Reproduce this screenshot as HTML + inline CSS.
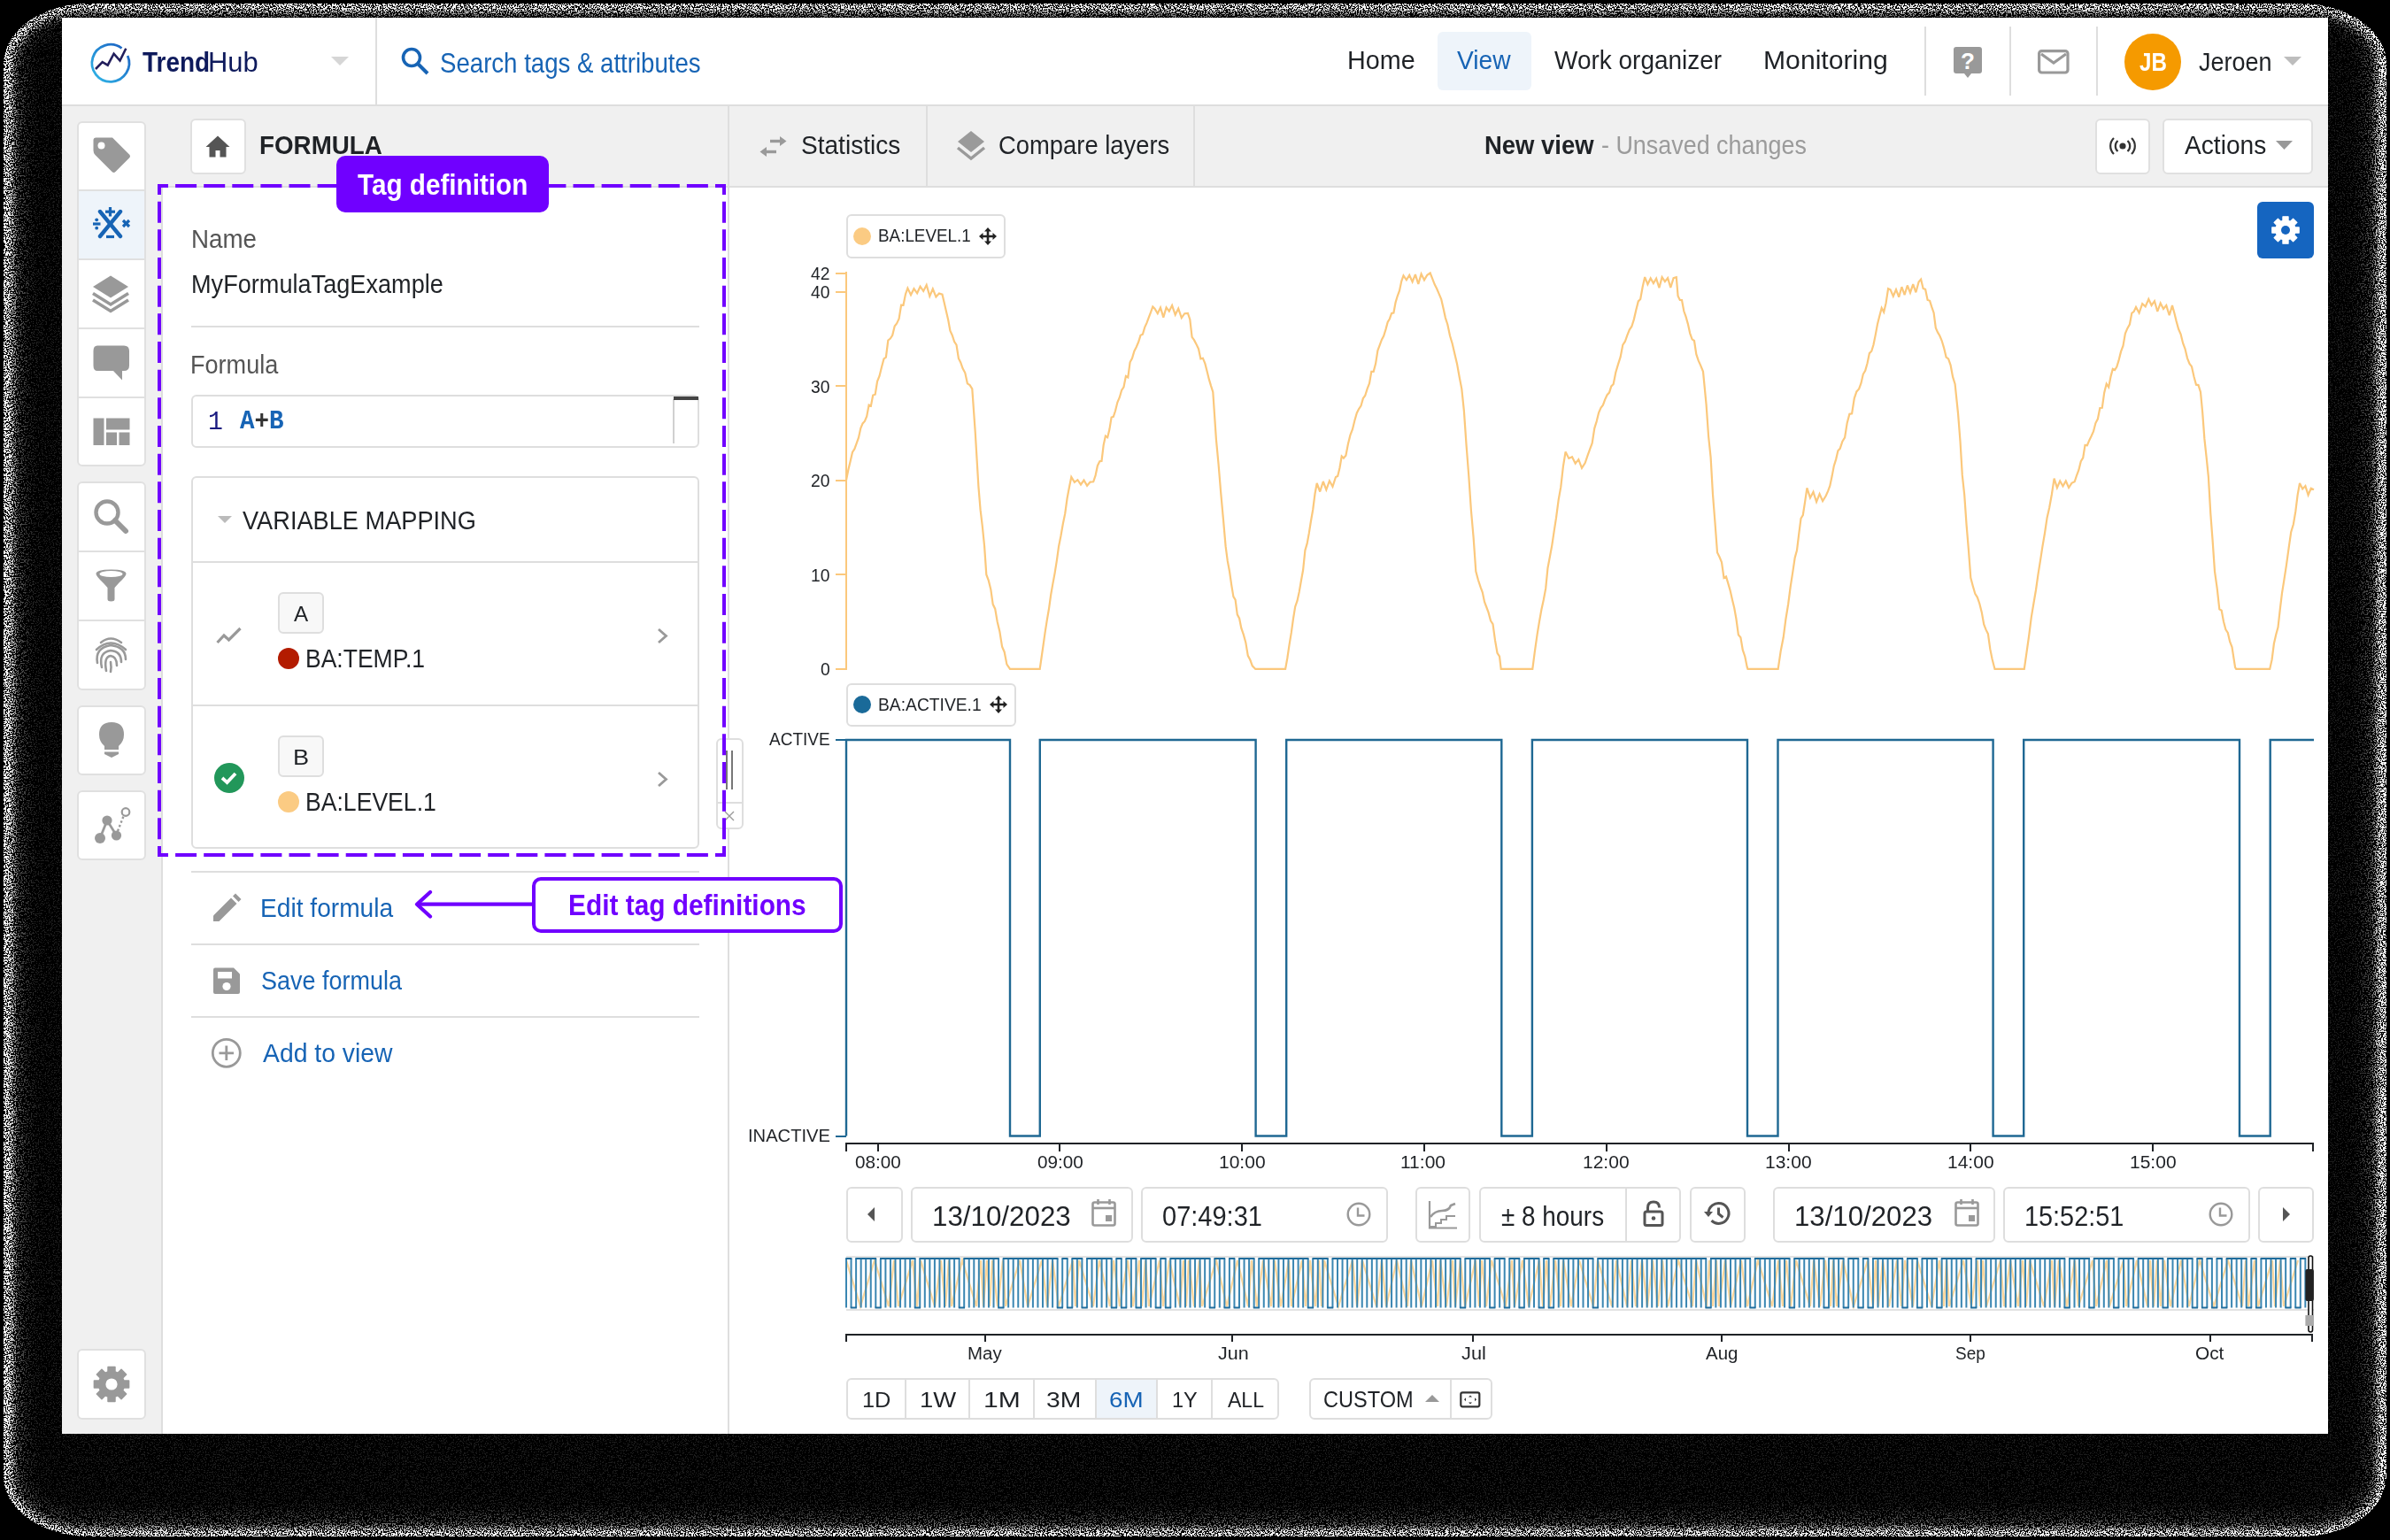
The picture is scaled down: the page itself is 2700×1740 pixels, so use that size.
<!DOCTYPE html>
<html><head><meta charset="utf-8"><title>TrendHub - Formula</title>
<style>
html,body{margin:0;padding:0;}
body{width:2700px;height:1740px;overflow:hidden;background:#000;position:relative;font-family:"Liberation Sans",sans-serif;}
.t{position:absolute;white-space:nowrap;transform-origin:0 0;}
.b{position:absolute;box-sizing:border-box;}
.s{position:absolute;overflow:visible;}
</style></head><body>
<svg class="s" style="left:0;top:0" width="2700" height="1740" viewBox="0 0 2700 1740">
<defs>
<filter id="blur4" x="-5%" y="-5%" width="110%" height="110%"><feGaussianBlur stdDeviation="4"/></filter>
<filter id="blur8" x="-5%" y="-5%" width="110%" height="110%"><feGaussianBlur stdDeviation="8"/></filter>
<filter id="speck" x="0" y="0" width="2700" height="1740" filterUnits="userSpaceOnUse" color-interpolation-filters="sRGB">
<feTurbulence type="fractalNoise" baseFrequency="0.65" numOctaves="2" seed="5" result="noise"/>
<feColorMatrix in="noise" type="matrix" values="0 0 0 0 1  0 0 0 0 1  0 0 0 0 1  3.2 0 0 0 -1.1" result="nw"/>
<feColorMatrix in="SourceGraphic" type="matrix" values="0 0 0 0 1  0 0 0 0 1  0 0 0 0 1  1 0 0 0 0" result="lw"/>
<feComposite in="lw" in2="nw" operator="arithmetic" k1="0" k2="12" k3="-12" k4="0" result="bin"/>
<feColorMatrix in="SourceGraphic" type="matrix" values="0 1 0 0 0  0 1 0 0 0  0 1 0 0 0  0 0 0 1 0" result="bright"/>
<feComposite in="bright" in2="bin" operator="in" result="mask"/>
<feFlood flood-color="#000" result="blk"/>
<feMerge><feMergeNode in="blk"/><feMergeNode in="mask"/></feMerge>
</filter>
</defs>
<g filter="url(#speck)">
<rect x="0" y="0" width="2700" height="1740" fill="#000"/>
<rect x="4" y="4" width="2692" height="1732" rx="96" ry="68" fill="#99ff00"/>
<rect x="16" y="17" width="2668" height="1709" rx="80" ry="56" fill="#595900" filter="url(#blur4)"/>
<rect x="30" y="22" width="2640" height="1688" rx="60" ry="46" fill="#401e00" filter="url(#blur8)"/>
</g>
</svg><div class="b" style="left:70px;top:20px;width:2560px;height:1600px;background:#fff;border-radius:0px;"></div><div class="b" style="left:70px;top:118px;width:2560px;height:2px;background:#dedede;border-radius:0px;"></div><div class="b" style="left:70px;top:120px;width:2560px;height:90px;background:#f0f0f0;border-radius:0px;"></div><div class="b" style="left:184px;top:210px;width:2446px;height:2px;background:#dedede;border-radius:0px;"></div><div class="b" style="left:70px;top:210px;width:112px;height:1410px;background:#f0f0f0;border-radius:0px;"></div><div class="b" style="left:182px;top:212px;width:2px;height:1408px;background:#dedede;border-radius:0px;"></div><div class="b" style="left:822px;top:120px;width:2px;height:1500px;background:#dedede;border-radius:0px;"></div><svg class="s" style="left:100px;top:45px;" width="48" height="50" viewBox="0 0 48 50">
<defs><linearGradient id="lg" x1="0" y1="1" x2="1" y2="0"><stop offset="0" stop-color="#30b8e8"/><stop offset="1" stop-color="#1a5cc0"/></linearGradient></defs>
<path d="M37.5 9.5 A21 21 0 1 0 44.2 18" fill="none" stroke="url(#lg)" stroke-width="2.8"/>
<polyline points="8,33 15.7,25.2 21.7,28.6 28.6,15.7 35.5,23.5 42.3,9.7" fill="none" stroke="#221e5c" stroke-width="2.6" stroke-linejoin="miter"/>
</svg><div class="t" style="left:160.93px;top:54.65px;font-size:31.25px;line-height:31.25px;color:#0e1a5c;font-weight:700;font-family:'Liberation Sans', sans-serif;transform:scaleX(0.8945);">Trend</div><div class="t" style="left:234.53px;top:54.65px;font-size:31.25px;line-height:31.25px;color:#0e1a5c;font-weight:400;font-family:'Liberation Sans', sans-serif;transform:scaleX(0.9888);">Hub</div><svg class="s" style="left:374px;top:64px;" width="20" height="10" viewBox="0 0 20 10"><path d="M0 0 L20 0 L10 10 Z" fill="#d6d6d6"/></svg><div class="b" style="left:424px;top:20px;width:2px;height:98px;background:#dedede;border-radius:0px;"></div><svg class="s" style="left:452px;top:52px;" width="36" height="36" viewBox="0 0 36 36"><circle cx="13" cy="13" r="9.5" fill="none" stroke="#1764b5" stroke-width="3.6"/><line x1="20" y1="20" x2="31" y2="31" stroke="#1764b5" stroke-width="4" stroke-linecap="butt"/></svg><div class="t" style="left:497.21px;top:55.01px;font-size:32.0px;line-height:32.0px;color:#1764b5;font-weight:400;font-family:'Liberation Sans', sans-serif;transform:scaleX(0.8628);">Search tags &amp; attributes</div><div class="t" style="left:1522.14px;top:54.34px;font-size:29.25px;line-height:29.25px;color:#1f2226;font-weight:400;font-family:'Liberation Sans', sans-serif;transform:scaleX(0.9838);">Home</div><div class="b" style="left:1624px;top:36px;width:106px;height:66px;background:#eef4fa;border-radius:6px;"></div><div class="t" style="left:1646.40px;top:54.34px;font-size:29.25px;line-height:29.25px;color:#1764b5;font-weight:400;font-family:'Liberation Sans', sans-serif;transform:scaleX(0.9637);">View</div><div class="t" style="left:1756.40px;top:54.34px;font-size:29.25px;line-height:29.25px;color:#1f2226;font-weight:400;font-family:'Liberation Sans', sans-serif;transform:scaleX(0.9564);">Work organizer</div><div class="t" style="left:1991.53px;top:54.34px;font-size:29.25px;line-height:29.25px;color:#1f2226;font-weight:400;font-family:'Liberation Sans', sans-serif;transform:scaleX(1.0311);">Monitoring</div><div class="b" style="left:2174px;top:30px;width:2px;height:78px;background:#dedede;border-radius:0px;"></div><div class="b" style="left:2270px;top:30px;width:2px;height:78px;background:#dedede;border-radius:0px;"></div><div class="b" style="left:2368px;top:30px;width:2px;height:78px;background:#dedede;border-radius:0px;"></div><svg class="s" style="left:2207px;top:52px;" width="32" height="38" viewBox="0 0 32 38"><path d="M3 1 H29 A3 3 0 0 1 32 4 V28 A3 3 0 0 1 29 31 H20 L16 36 L12 31 H3 A3 3 0 0 1 0 28 V4 A3 3 0 0 1 3 1 Z" fill="#999"/><text x="16" y="26" font-family="Liberation Sans" font-weight="700" font-size="26" fill="#fff" text-anchor="middle">?</text></svg><svg class="s" style="left:2302px;top:56px;" width="36" height="28" viewBox="0 0 36 28"><rect x="1.6" y="1.6" width="32.4" height="24.4" rx="3" fill="none" stroke="#999" stroke-width="3.2"/><polyline points="4,5 18,15 32,5" fill="none" stroke="#999" stroke-width="3.2"/></svg><div class="b" style="left:2400px;top:38px;width:64px;height:64px;border-radius:50%;background:#f59a00;"></div><div class="t" style="left:2416.67px;top:55.55px;font-size:29.0px;line-height:29.0px;color:#fff;font-weight:700;font-family:'Liberation Sans', sans-serif;transform:scaleX(0.8329);">JB</div><div class="t" style="left:2483.73px;top:55.55px;font-size:29.0px;line-height:29.0px;color:#1f2226;font-weight:400;font-family:'Liberation Sans', sans-serif;transform:scaleX(0.9316);">Jeroen</div><svg class="s" style="left:2580px;top:63.5px;" width="20" height="10" viewBox="0 0 20 10"><path d="M0 0 L20 0 L10 10 Z" fill="#bdbdbd"/></svg><div class="b" style="left:214.5px;top:134px;width:63px;height:63px;background:#fff;border:2px solid #e0e0e0;border-radius:6px;"></div><svg class="s" style="left:232px;top:153px;" width="28" height="25" viewBox="0 0 28 25"><path d="M14 0.5 L27.5 13 H23.5 V24.5 H16.5 V17 H11.5 V24.5 H4.5 V13 H0.5 Z" fill="#555"/></svg><div class="t" style="left:293.16px;top:149.29px;font-size:30.25px;line-height:30.25px;color:#1f2226;font-weight:700;font-family:'Liberation Sans', sans-serif;transform:scaleX(0.9183);">FORMULA</div><svg class="s" style="left:858px;top:154px;" width="31" height="24" viewBox="0 0 31 24"><path d="M12 5.5 H28" stroke="#9a9a9a" stroke-width="3.4"/><path d="M23 0 L30.5 5.5 L23 11 Z" fill="#9a9a9a"/><path d="M19 17.5 H3" stroke="#9a9a9a" stroke-width="3.4"/><path d="M8 12 L0.5 17.5 L8 23 Z" fill="#9a9a9a"/></svg><div class="t" style="left:905.25px;top:149.74px;font-size:29.25px;line-height:29.25px;color:#1f2226;font-weight:400;font-family:'Liberation Sans', sans-serif;transform:scaleX(0.9590);">Statistics</div><div class="b" style="left:1046px;top:120px;width:2px;height:90px;background:#dedede;border-radius:0px;"></div><svg class="s" style="left:1082px;top:148px;" width="30" height="33" viewBox="0 0 30 33"><path d="M15 0 L30 12 L15 24 L0 12 Z" fill="#9a9a9a"/><path d="M0 19 L15 31 L30 19" fill="none" stroke="#9a9a9a" stroke-width="3.4"/></svg><div class="t" style="left:1128.40px;top:149.74px;font-size:29.25px;line-height:29.25px;color:#1f2226;font-weight:400;font-family:'Liberation Sans', sans-serif;transform:scaleX(0.9361);">Compare layers</div><div class="b" style="left:1348px;top:120px;width:2px;height:90px;background:#dedede;border-radius:0px;"></div><div class="t" style="left:1676.72px;top:149.74px;font-size:29.25px;line-height:29.25px;color:#1f2226;font-weight:700;font-family:'Liberation Sans', sans-serif;transform:scaleX(0.9382);">New view</div><div class="t" style="left:1808.80px;top:149.74px;font-size:29.25px;line-height:29.25px;color:#9b9b9b;font-weight:400;font-family:'Liberation Sans', sans-serif;transform:scaleX(0.9200);">- Unsaved changes</div><div class="b" style="left:2367px;top:134px;width:62px;height:63px;background:#fff;border:2px solid #e0e0e0;border-radius:6px;"></div><svg class="s" style="left:2384px;top:155px;" width="28" height="20" viewBox="0 0 28 20"><circle cx="14" cy="10" r="3.6" fill="#333"/><path d="M8.5 4 A8 8 0 0 0 8.5 16 M19.5 4 A8 8 0 0 1 19.5 16" fill="none" stroke="#333" stroke-width="2.2"/><path d="M4 1 A12.5 12.5 0 0 0 4 19 M24 1 A12.5 12.5 0 0 1 24 19" fill="none" stroke="#333" stroke-width="2.2"/></svg><div class="b" style="left:2443px;top:134px;width:170px;height:63px;background:#fff;border:2px solid #e0e0e0;border-radius:6px;"></div><div class="t" style="left:2467.90px;top:150.14px;font-size:29.25px;line-height:29.25px;color:#1f2226;font-weight:400;font-family:'Liberation Sans', sans-serif;transform:scaleX(0.9619);">Actions</div><svg class="s" style="left:2571px;top:158.5px;" width="19" height="10" viewBox="0 0 19 10"><path d="M0 0 L19 0 L9.5 10 Z" fill="#999"/></svg><div class="b" style="left:87px;top:137px;width:78px;height:390px;background:#fff;border:2px solid #e0e0e0;border-radius:6px;overflow:hidden;"><div style="position:absolute;left:0;top:77px;width:74px;height:76px;background:#eef4fa"></div><div style="position:absolute;left:0;top:75px;width:74px;height:2px;background:#e0e0e0"></div><div style="position:absolute;left:0;top:153px;width:74px;height:2px;background:#e0e0e0"></div><div style="position:absolute;left:0;top:231px;width:74px;height:2px;background:#e0e0e0"></div><div style="position:absolute;left:0;top:309px;width:74px;height:2px;background:#e0e0e0"></div></div><div class="b" style="left:87px;top:544px;width:78px;height:236px;background:#fff;border:2px solid #e0e0e0;border-radius:6px;overflow:hidden;"><div style="position:absolute;left:0;top:76px;width:74px;height:2px;background:#e0e0e0"></div><div style="position:absolute;left:0;top:154px;width:74px;height:2px;background:#e0e0e0"></div></div><div class="b" style="left:87px;top:797px;width:78px;height:79px;background:#fff;border:2px solid #e0e0e0;border-radius:6px;overflow:hidden;"></div><div class="b" style="left:87px;top:893px;width:78px;height:79px;background:#fff;border:2px solid #e0e0e0;border-radius:6px;overflow:hidden;"></div><div class="b" style="left:87px;top:1524px;width:78px;height:80px;background:#fff;border:2px solid #e0e0e0;border-radius:6px;overflow:hidden;"></div><svg class="s" style="left:104px;top:154px;" width="44" height="44" viewBox="0 0 44 44"><path d="M23 1.5 L42 20.5 Q44 22.5 42 24.5 L26.5 40 Q24.5 42 22.5 40 L3.5 21 Q1.5 19 1.5 16 V4.5 Q1.5 1.5 4.5 1.5 Z" fill="#999"/><circle cx="10.5" cy="10.5" r="4" fill="#fff"/></svg><svg class="s" style="left:104px;top:234px;" width="44" height="38" viewBox="0 0 44 38"><g stroke="#1764b5" stroke-width="4.4" stroke-linecap="round">
<line x1="9" y1="5" x2="32" y2="33"/><line x1="32" y1="5" x2="9" y2="33"/></g>
<g stroke="#1764b5" stroke-width="3.2"><line x1="20.5" y1="0" x2="20.5" y2="10.5"/><line x1="15" y1="5.2" x2="26" y2="5.2"/>
<line x1="16" y1="33.5" x2="25" y2="33.5"/>
<line x1="1" y1="19" x2="9.5" y2="19"/>
<line x1="35" y1="15" x2="42" y2="22"/><line x1="42" y1="15" x2="35" y2="22"/></g>
<circle cx="5.2" cy="14.3" r="1.9" fill="#1764b5"/><circle cx="5.2" cy="23.7" r="1.9" fill="#1764b5"/></svg><svg class="s" style="left:104px;top:311px;" width="44" height="44" viewBox="0 0 44 44"><path d="M21 0.5 L41 13 L21 25.5 L1 13 Z" fill="#999"/><path d="M1 20.5 L21 33 L41 20.5" fill="none" stroke="#999" stroke-width="3.6"/><path d="M1 28 L21 40.5 L41 28" fill="none" stroke="#999" stroke-width="3.6"/></svg><svg class="s" style="left:104px;top:389px;" width="44" height="42" viewBox="0 0 44 42"><path d="M6 1.5 H36 Q42 1.5 42 7.5 V24 Q42 30 36 30 H34 V40.5 L24 30 H6 Q1.5 30 1.5 24 V7.5 Q1.5 1.5 6 1.5 Z" fill="#999"/></svg><svg class="s" style="left:104px;top:472px;" width="44" height="32" viewBox="0 0 44 32"><rect x="1.5" y="0.5" width="12" height="30.5" fill="#999"/><rect x="16" y="0.5" width="26.5" height="13" fill="#999"/><rect x="16" y="16.5" width="12" height="14.5" fill="#999"/><rect x="30.5" y="16.5" width="12" height="14.5" fill="#999"/></svg><svg class="s" style="left:104px;top:562px;" width="44" height="44" viewBox="0 0 44 44"><circle cx="17" cy="17" r="12.5" fill="none" stroke="#999" stroke-width="4.4"/><line x1="26" y1="26" x2="38" y2="38" stroke="#999" stroke-width="6" stroke-linecap="round"/></svg><svg class="s" style="left:104px;top:642px;" width="44" height="40" viewBox="0 0 44 40"><path d="M4.5 6.5 Q4.5 1.5 21.5 1.5 Q38.5 1.5 38.5 6.5 Q38.5 9 30 17 L25.5 22 V35 Q25.5 37.5 21.5 37.5 Q17.5 37.5 17.5 35 V22 L13 17 Q4.5 9 4.5 6.5 Z" fill="#999"/><ellipse cx="21.5" cy="6.5" rx="13" ry="3.6" fill="#fff"/></svg><svg class="s" style="left:104px;top:718px;" width="44" height="44" viewBox="0 0 44 44"><g fill="none" stroke="#999" stroke-width="2.6" stroke-linecap="round"><path d="M10 8 Q21 -1 33 8"/><path d="M5 16 Q21 1 38 16"/><path d="M6 31 Q3 14 21 11 Q38 13 38 27"/><path d="M11 36 Q7 19 21 17 Q33 18 33 30"/><path d="M16 40 Q13 24 21 23 Q28 24 28 34"/><path d="M21 30 Q22 36 21 41"/></g></svg><svg class="s" style="left:104px;top:814px;" width="44" height="46" viewBox="0 0 44 46"><path d="M22 2 Q36 2 36 16 Q36 24 30 29 V33 H14 V29 Q8 24 8 16 Q8 2 22 2 Z" fill="#999"/><path d="M14 35.5 H30 V38 L22 42 L14 38 Z" fill="#999"/></svg><svg class="s" style="left:104px;top:911px;" width="44" height="44" viewBox="0 0 44 44"><line x1="9" y1="36" x2="17" y2="16" stroke="#999" stroke-width="2.8"/><line x1="17" y1="16" x2="27" y2="32" stroke="#999" stroke-width="2.8"/><line x1="29" y1="28" x2="36" y2="10" stroke="#999" stroke-width="2.4" stroke-dasharray="2.5 2.5"/><circle cx="9" cy="36" r="6" fill="#999"/><circle cx="17" cy="16" r="5.6" fill="#999"/><circle cx="27.5" cy="33" r="5.6" fill="#999"/><circle cx="38" cy="6.5" r="4.3" fill="none" stroke="#999" stroke-width="2.2"/></svg><svg class="s" style="left:104px;top:1542px;" width="44" height="44" viewBox="0 0 44 44"><path d="M17.99 8.06 L18.03 2.40 L25.97 2.40 L26.01 8.06 L29.02 9.31 L33.05 5.33 L38.67 10.95 L34.69 14.98 L35.94 17.99 L41.60 18.03 L41.60 25.97 L35.94 26.01 L34.69 29.02 L38.67 33.05 L33.05 38.67 L29.02 34.69 L26.01 35.94 L25.97 41.60 L18.03 41.60 L17.99 35.94 L14.98 34.69 L10.95 38.67 L5.33 33.05 L9.31 29.02 L8.06 26.01 L2.40 25.97 L2.40 18.03 L8.06 17.99 L9.31 14.98 L5.33 10.95 L10.95 5.33 L14.98 9.31 Z" fill="#999" stroke="#999" stroke-width="1.5" stroke-linejoin="round"/><circle cx="22" cy="22" r="6.6" fill="#fff"/></svg><div class="t" style="left:215.50px;top:256.05px;font-size:29.0px;line-height:29.0px;color:#555;font-weight:400;font-family:'Liberation Sans', sans-serif;transform:scaleX(0.9566);">Name</div><div class="t" style="left:215.59px;top:305.63px;font-size:29.5px;line-height:29.5px;color:#1f2226;font-weight:400;font-family:'Liberation Sans', sans-serif;transform:scaleX(0.9192);">MyFormulaTagExample</div><div class="b" style="left:216px;top:367.5px;width:574px;height:2px;background:#dedede;border-radius:0px;"></div><div class="t" style="left:214.96px;top:398.15px;font-size:29.0px;line-height:29.0px;color:#555;font-weight:400;font-family:'Liberation Sans', sans-serif;transform:scaleX(0.9336);">Formula</div><div class="b" style="left:216px;top:446px;width:574px;height:60px;background:#fff;border:2px solid #dedede;border-radius:6px;"></div><div class="b" style="left:760px;top:451px;width:1.5px;height:50px;background:#d0d0d0;border-radius:0px;"></div><div class="b" style="left:760.5px;top:448px;width:28px;height:3.6px;background:#444;border-radius:0px;"></div><div class="t" style="left:234.96px;top:463.37px;font-size:29.0px;line-height:29.0px;color:#1a1a80;font-weight:400;font-family:'Liberation Mono', monospace;transform:scaleX(0.9712);">1</div><div class="t" style="left:271px;top:462px;font-size:29px;line-height:29px;font-weight:700;font-family:'Liberation Mono',monospace;color:#333;transform:scaleX(0.95);"><span style="color:#1764b5">A</span>+<span style="color:#1764b5">B</span></div><div class="b" style="left:216px;top:538px;width:574px;height:421px;background:#fff;border:2px solid #dedede;border-radius:6px;"></div><svg class="s" style="left:246px;top:583px;" width="16" height="8" viewBox="0 0 16 8"><path d="M0 0 L16 0 L8 8 Z" fill="#bbb"/></svg><div class="t" style="left:274.31px;top:574.05px;font-size:29.0px;line-height:29.0px;color:#1f2226;font-weight:400;font-family:'Liberation Sans', sans-serif;transform:scaleX(0.9374);">VARIABLE MAPPING</div><div class="b" style="left:218px;top:634px;width:570px;height:2px;background:#dedede;border-radius:0px;"></div><div class="b" style="left:218px;top:796px;width:570px;height:2px;background:#dedede;border-radius:0px;"></div><svg class="s" style="left:244px;top:708px;" width="29" height="20" viewBox="0 0 29 20"><polyline points="1.5,18 9,10 14.5,15 27.5,2" fill="none" stroke="#999" stroke-width="3.2"/></svg><div class="b" style="left:314px;top:668.5px;width:51.5px;height:47px;background:#f8f8f8;border:2px solid #dedede;border-radius:6px;"></div><div class="t" style="left:331.90px;top:681.90px;font-size:23.75px;line-height:23.75px;color:#1f2226;font-weight:400;font-family:'Liberation Sans', sans-serif;transform:scaleX(1.0191);">A</div><div class="b" style="left:314px;top:731.7px;width:24px;height:24px;border-radius:50%;background:#b31b00;"></div><div class="t" style="left:344.84px;top:729.33px;font-size:29.5px;line-height:29.5px;color:#1f2226;font-weight:400;font-family:'Liberation Sans', sans-serif;transform:scaleX(0.8982);">BA:TEMP.1</div><svg class="s" style="left:742px;top:709px;" width="13" height="19" viewBox="0 0 13 19"><polyline points="2,2 10.5,9.5 2,17" fill="none" stroke="#999" stroke-width="2.8"/></svg><div class="b" style="left:242px;top:862px;width:34px;height:34px;border-radius:50%;background:#22975a;"></div><svg class="s" style="left:248px;top:869px;" width="22" height="20" viewBox="0 0 22 20"><polyline points="3,10 8.5,15 18,5" fill="none" stroke="#fff" stroke-width="3.8"/></svg><div class="b" style="left:314px;top:830.5px;width:51.5px;height:47px;background:#f8f8f8;border:2px solid #dedede;border-radius:6px;"></div><div class="t" style="left:330.83px;top:843.90px;font-size:23.75px;line-height:23.75px;color:#1f2226;font-weight:400;font-family:'Liberation Sans', sans-serif;transform:scaleX(1.1417);">B</div><div class="b" style="left:314px;top:893.7px;width:24px;height:24px;border-radius:50%;background:#fbcb83;"></div><div class="t" style="left:344.84px;top:891.33px;font-size:29.5px;line-height:29.5px;color:#1f2226;font-weight:400;font-family:'Liberation Sans', sans-serif;transform:scaleX(0.9014);">BA:LEVEL.1</div><svg class="s" style="left:742px;top:871px;" width="13" height="19" viewBox="0 0 13 19"><polyline points="2,2 10.5,9.5 2,17" fill="none" stroke="#999" stroke-width="2.8"/></svg><div class="b" style="left:808.5px;top:834px;width:31px;height:103px;background:#fff;border:2px solid #dedede;border-radius:6px;"></div><div class="b" style="left:810.5px;top:905.5px;width:27px;height:2px;background:#dedede;border-radius:0px;"></div><div class="b" style="left:819.5px;top:848px;width:2px;height:44px;background:#777;border-radius:0px;"></div><div class="b" style="left:826px;top:848px;width:2px;height:44px;background:#777;border-radius:0px;"></div><svg class="s" style="left:818px;top:916px;" width="12" height="12" viewBox="0 0 12 12"><path d="M1 1 L11 11 M11 1 L1 11" stroke="#999" stroke-width="1.4"/></svg><svg class="s" style="left:0px;top:0px;" width="2700" height="1740" viewBox="0 0 2700 1740"><path d="M178 210 H820" stroke="#7000ff" stroke-width="4" fill="none" stroke-dasharray="24 8.100" stroke-dashoffset="12"/><path d="M178 966 H820" stroke="#7000ff" stroke-width="4" fill="none" stroke-dasharray="24 8.100" stroke-dashoffset="12"/><path d="M180 208 V968" stroke="#7000ff" stroke-width="4" fill="none" stroke-dasharray="24 7.667" stroke-dashoffset="12"/><path d="M818 208 V968" stroke="#7000ff" stroke-width="4" fill="none" stroke-dasharray="24 7.667" stroke-dashoffset="12"/></svg><div class="b" style="left:380px;top:176px;width:240px;height:64px;background:#7000ff;border-radius:10px;"></div><div class="t" style="left:403.65px;top:192.03px;font-size:33.75px;line-height:33.75px;color:#fff;font-weight:700;font-family:'Liberation Sans', sans-serif;transform:scaleX(0.8790);">Tag definition</div><div class="b" style="left:216px;top:983.5px;width:574px;height:2px;background:#dedede;border-radius:0px;"></div><svg class="s" style="left:240px;top:1010px;" width="32" height="32" viewBox="0 0 32 32"><path d="M1 31 V24.5 L21 4.5 L27.5 11 L7.5 31 Z" fill="#999"/><path d="M23 2.5 L26 -0.5 L32.5 6 L29.5 9 Z" fill="#999"/></svg><div class="t" style="left:294.41px;top:1010.73px;font-size:29.5px;line-height:29.5px;color:#1764b5;font-weight:400;font-family:'Liberation Sans', sans-serif;transform:scaleX(0.9542);">Edit formula</div><div class="b" style="left:216px;top:1066px;width:574px;height:2px;background:#dedede;border-radius:0px;"></div><svg class="s" style="left:240px;top:1092px;" width="32" height="32" viewBox="0 0 32 32"><path d="M1 3.5 Q1 1.5 3 1.5 H24 L31 8.5 V29 Q31 31 29 31 H3 Q1 31 1 29 Z" fill="#999"/><rect x="6" y="6" width="16" height="7.5" fill="#fff"/><circle cx="16" cy="22.5" r="4.6" fill="#fff"/></svg><div class="t" style="left:295.42px;top:1093.33px;font-size:29.5px;line-height:29.5px;color:#1764b5;font-weight:400;font-family:'Liberation Sans', sans-serif;transform:scaleX(0.9142);">Save formula</div><div class="b" style="left:216px;top:1148px;width:574px;height:2px;background:#dedede;border-radius:0px;"></div><svg class="s" style="left:238px;top:1172px;" width="36" height="36" viewBox="0 0 36 36"><circle cx="17.8" cy="17.8" r="15.5" fill="none" stroke="#999" stroke-width="2.8"/><path d="M17.8 9.5 V26 M9.5 17.8 H26" stroke="#999" stroke-width="2.8"/></svg><div class="t" style="left:296.60px;top:1175.33px;font-size:29.5px;line-height:29.5px;color:#1764b5;font-weight:400;font-family:'Liberation Sans', sans-serif;transform:scaleX(0.9600);">Add to view</div><svg class="s" style="left:466px;top:1004px;" width="140" height="36" viewBox="0 0 140 36"><path d="M6 17.7 H136" stroke="#7000ff" stroke-width="4.2"/><path d="M20 4 L5 17.7 L20 31.5" fill="none" stroke="#7000ff" stroke-width="4.2" stroke-linecap="round" stroke-linejoin="round"/></svg><div class="b" style="left:600.5px;top:990.5px;width:351px;height:63px;background:#fff;border:4.2px solid #7000ff;border-radius:10px;"></div><div class="t" style="left:641.61px;top:1006.17px;font-size:33.0px;line-height:33.0px;color:#7000ff;font-weight:700;font-family:'Liberation Sans', sans-serif;transform:scaleX(0.9048);">Edit tag definitions</div><div class="b" style="left:2550px;top:228px;width:64px;height:64px;background:#1565c0;border-radius:6px;"></div><svg class="s" style="left:2566px;top:244px;" width="32" height="32" viewBox="0 0 32 32"><path d="M12.90 5.24 L12.92 0.81 L19.08 0.81 L19.10 5.24 L21.42 6.20 L24.56 3.08 L28.92 7.44 L25.80 10.58 L26.76 12.90 L31.19 12.92 L31.19 19.08 L26.76 19.10 L25.80 21.42 L28.92 24.56 L24.56 28.92 L21.42 25.80 L19.10 26.76 L19.08 31.19 L12.92 31.19 L12.90 26.76 L10.58 25.80 L7.44 28.92 L3.08 24.56 L6.20 21.42 L5.24 19.10 L0.81 19.08 L0.81 12.92 L5.24 12.90 L6.20 10.58 L3.08 7.44 L7.44 3.08 L10.58 6.20 Z" fill="#fff" stroke="#fff" stroke-width="1.2" stroke-linejoin="round"/><circle cx="16" cy="16" r="5" fill="#1565c0"/></svg><div class="b" style="left:955.5px;top:242px;width:180px;height:49.5px;background:#fff;border:2px solid #dedede;border-radius:6px;"></div><div class="b" style="left:964px;top:257px;width:20px;height:20px;border-radius:50%;background:#fbcb83;"></div><div class="t" style="left:991.81px;top:256.26px;font-size:20.25px;line-height:20.25px;color:#1f2226;font-weight:400;font-family:'Liberation Sans', sans-serif;transform:scaleX(0.9308);">BA:LEVEL.1</div><svg class="s" style="left:1105px;top:256px;" width="22" height="22" viewBox="0 0 22 22"><path d="M11 1 L15 5.5 H12.3 V9.7 H16.5 V7 L21 11 L16.5 15 V12.3 H12.3 V16.5 H15 L11 21 L7 16.5 H9.7 V12.3 H5.5 V15 L1 11 L5.5 7 V9.7 H9.7 V5.5 H7 Z" fill="#222"/></svg><div class="b" style="left:955.5px;top:771.5px;width:192px;height:49.5px;background:#fff;border:2px solid #dedede;border-radius:6px;"></div><div class="b" style="left:964px;top:786px;width:20px;height:20px;border-radius:50%;background:#1a6a99;"></div><div class="t" style="left:991.78px;top:785.76px;font-size:20.25px;line-height:20.25px;color:#1f2226;font-weight:400;font-family:'Liberation Sans', sans-serif;transform:scaleX(0.9508);">BA:ACTIVE.1</div><svg class="s" style="left:1117px;top:785px;" width="22" height="22" viewBox="0 0 22 22"><path d="M11 1 L15 5.5 H12.3 V9.7 H16.5 V7 L21 11 L16.5 15 V12.3 H12.3 V16.5 H15 L11 21 L7 16.5 H9.7 V12.3 H5.5 V15 L1 11 L5.5 7 V9.7 H9.7 V5.5 H7 Z" fill="#222"/></svg><div class="t" style="left:916.45px;top:298.75px;font-size:20.75px;line-height:20.75px;color:#1f2226;font-weight:400;font-family:'Liberation Sans', sans-serif;transform:scaleX(0.9300);">42</div><div class="b" style="left:944px;top:307.516px;width:12px;height:2px;background:#fbc87c;border-radius:0px;"></div><div class="t" style="left:916.17px;top:320.06px;font-size:20.75px;line-height:20.75px;color:#1f2226;font-weight:400;font-family:'Liberation Sans', sans-serif;transform:scaleX(0.9300);">40</div><div class="b" style="left:944px;top:328.82px;width:12px;height:2px;background:#fbc87c;border-radius:0px;"></div><div class="t" style="left:916.17px;top:426.58px;font-size:20.75px;line-height:20.75px;color:#1f2226;font-weight:400;font-family:'Liberation Sans', sans-serif;transform:scaleX(0.9300);">30</div><div class="b" style="left:944px;top:435.34px;width:12px;height:2px;background:#fbc87c;border-radius:0px;"></div><div class="t" style="left:916.17px;top:533.10px;font-size:20.75px;line-height:20.75px;color:#1f2226;font-weight:400;font-family:'Liberation Sans', sans-serif;transform:scaleX(0.9300);">20</div><div class="b" style="left:944px;top:541.86px;width:12px;height:2px;background:#fbc87c;border-radius:0px;"></div><div class="t" style="left:916.17px;top:639.62px;font-size:20.75px;line-height:20.75px;color:#1f2226;font-weight:400;font-family:'Liberation Sans', sans-serif;transform:scaleX(0.9300);">10</div><div class="b" style="left:944px;top:648.38px;width:12px;height:2px;background:#fbc87c;border-radius:0px;"></div><div class="t" style="left:926.96px;top:746.14px;font-size:20.75px;line-height:20.75px;color:#1f2226;font-weight:400;font-family:'Liberation Sans', sans-serif;transform:scaleX(0.9300);">0</div><div class="b" style="left:944px;top:754.9px;width:12px;height:2px;background:#fbc87c;border-radius:0px;"></div><div class="b" style="left:955px;top:307px;width:2px;height:450px;background:#fbc87c;border-radius:0px;"></div><svg class="s" style="left:0px;top:0px;pointer-events:none" width="2700" height="1740" viewBox="0 0 2700 1740"><path d="M956.0 542.5 L958.3 531.1 L960.7 521.0 L963.0 511.0 L965.3 507.4 L967.6 501.1 L970.0 494.4 L972.3 483.8 L974.6 478.4 L976.9 476.0 L979.2 470.5 L981.6 457.5 L983.9 458.6 L986.2 446.5 L988.7 445.7 L991.1 430.9 L993.5 424.9 L996.0 414.8 L998.5 405.4 L1000.9 403.7 L1003.3 384.5 L1005.8 382.5 L1008.2 378.8 L1010.7 368.6 L1013.1 365.5 L1015.6 360.1 L1018.1 344.7 L1020.5 344.8 L1023.0 332.4 L1025.4 325.6 L1029.0 333.3 L1032.5 326.2 L1036.1 331.3 L1039.6 323.7 L1043.2 328.9 L1046.7 322.0 L1050.3 334.6 L1053.8 326.4 L1057.4 335.5 L1060.9 331.6 L1064.5 332.7 L1066.7 342.1 L1069.0 352.1 L1071.2 361.5 L1073.4 373.6 L1075.8 379.0 L1078.1 386.1 L1080.5 389.6 L1082.9 405.0 L1085.2 409.5 L1087.6 416.3 L1090.3 421.3 L1092.9 433.3 L1095.6 435.1 L1098.3 439.4 L1101.8 489.2 L1105.4 549.6 L1107.6 576.2 L1109.8 594.3 L1112.1 617.1 L1114.3 649.2 L1116.8 655.9 L1119.3 665.9 L1121.7 682.8 L1124.2 687.9 L1126.7 702.5 L1129.4 713.8 L1132.1 730.8 L1134.7 736.7 L1137.4 750.6 L1141.0 755.9 L1174.7 755.9 L1178.3 731.0 L1180.5 715.4 L1182.8 700.7 L1185.0 687.8 L1187.2 672.0 L1189.4 659.4 L1191.6 647.6 L1193.9 633.2 L1196.1 617.2 L1198.5 605.2 L1200.8 592.0 L1203.2 580.4 L1205.6 563.0 L1207.9 550.7 L1210.3 539.0 L1213.9 544.8 L1217.4 542.2 L1221.0 547.5 L1224.5 542.6 L1228.1 548.8 L1231.6 544.6 L1235.2 544.3 L1237.6 537.1 L1239.9 526.2 L1242.3 521.2 L1244.5 520.9 L1246.7 502.7 L1248.9 492.6 L1251.2 494.2 L1253.4 485.1 L1255.6 471.5 L1257.8 470.9 L1260.0 464.3 L1262.4 454.6 L1264.8 449.0 L1267.1 441.0 L1269.5 437.3 L1271.9 425.0 L1274.3 426.5 L1276.6 409.3 L1279.0 404.8 L1281.4 396.7 L1283.8 392.0 L1286.1 386.5 L1288.5 378.8 L1290.9 377.8 L1293.2 369.9 L1295.6 364.7 L1297.8 358.6 L1300.0 352.9 L1302.3 346.5 L1304.5 348.7 L1307.8 354.2 L1311.0 347.5 L1314.3 358.6 L1317.6 347.4 L1320.8 351.7 L1324.1 345.1 L1327.7 355.7 L1331.2 348.7 L1334.8 359.1 L1338.3 354.2 L1341.9 354.0 L1344.3 360.9 L1346.6 380.9 L1349.0 384.2 L1351.5 388.9 L1354.0 394.2 L1356.4 405.4 L1358.9 404.7 L1361.4 410.9 L1363.6 419.5 L1365.8 428.4 L1368.1 436.1 L1370.3 442.9 L1373.9 496.3 L1376.6 525.0 L1379.2 556.7 L1381.9 586.2 L1384.6 617.2 L1386.8 633.9 L1389.0 645.5 L1391.2 660.8 L1393.4 674.1 L1395.6 677.7 L1397.8 694.3 L1400.1 698.7 L1402.3 709.7 L1404.8 716.9 L1407.3 725.9 L1409.8 740.9 L1412.3 745.5 L1414.8 752.3 L1418.3 755.9 L1452.1 755.9 L1454.3 743.7 L1456.5 728.9 L1458.8 714.9 L1461.0 699.0 L1463.2 685.4 L1465.5 678.9 L1467.7 668.9 L1469.9 656.3 L1472.1 644.0 L1474.4 621.7 L1476.6 614.4 L1478.8 602.4 L1481.0 588.5 L1483.2 576.0 L1485.5 558.0 L1487.7 546.0 L1491.2 555.5 L1494.8 544.0 L1498.3 553.3 L1501.9 543.3 L1505.5 549.8 L1509.0 539.0 L1511.2 537.9 L1513.5 528.5 L1515.7 515.5 L1517.9 517.6 L1520.4 514.8 L1522.9 501.8 L1525.4 491.7 L1527.9 485.2 L1530.4 475.0 L1532.8 466.7 L1535.1 462.1 L1537.5 458.5 L1539.9 450.1 L1542.2 447.0 L1544.6 439.4 L1547.0 433.2 L1549.3 419.8 L1551.7 419.9 L1554.1 410.8 L1556.4 396.1 L1558.8 389.6 L1561.0 383.7 L1563.2 379.5 L1565.5 372.1 L1567.7 364.0 L1569.9 360.2 L1572.1 353.9 L1574.4 353.5 L1576.6 341.6 L1578.8 334.3 L1581.0 328.4 L1583.3 317.6 L1585.5 311.3 L1588.9 316.3 L1592.2 310.9 L1595.6 318.5 L1598.9 310.1 L1602.3 321.0 L1605.6 309.6 L1609.0 316.4 L1612.3 310.8 L1615.7 308.5 L1618.2 314.9 L1620.7 321.3 L1623.2 326.2 L1625.7 332.1 L1628.2 338.0 L1630.6 348.5 L1632.9 359.1 L1635.3 366.5 L1638.0 379.3 L1640.7 388.3 L1643.3 399.5 L1646.0 410.9 L1648.7 426.0 L1651.3 439.4 L1653.9 464.3 L1656.6 503.4 L1659.3 538.0 L1661.9 576.5 L1664.6 607.2 L1667.3 645.6 L1669.9 655.3 L1672.6 663.4 L1674.8 669.3 L1677.0 680.0 L1679.3 686.0 L1681.5 691.9 L1684.0 701.4 L1686.5 705.1 L1689.0 723.4 L1691.5 737.8 L1694.0 741.7 L1695.7 755.9 L1731.3 755.9 L1733.9 735.9 L1736.6 716.8 L1739.0 702.2 L1741.4 688.7 L1743.8 677.7 L1746.2 664.9 L1748.5 641.7 L1750.9 629.0 L1753.3 616.1 L1755.6 600.7 L1758.0 585.2 L1760.7 564.6 L1763.3 550.2 L1765.9 527.1 L1768.6 510.5 L1772.3 517.9 L1776.0 516.2 L1779.7 523.6 L1783.3 519.1 L1787.0 528.9 L1790.7 523.0 L1793.3 515.3 L1796.0 507.9 L1798.7 500.7 L1801.3 483.8 L1803.7 476.1 L1806.1 466.3 L1808.5 460.7 L1810.9 457.7 L1813.2 451.4 L1815.6 446.2 L1818.0 443.6 L1820.3 436.4 L1822.7 434.0 L1825.3 420.7 L1828.0 411.6 L1830.7 403.2 L1833.3 389.6 L1835.8 386.0 L1838.3 378.8 L1840.8 372.6 L1843.3 369.0 L1845.8 361.1 L1848.3 350.3 L1850.8 340.4 L1853.2 337.9 L1855.7 324.0 L1858.2 313.1 L1861.4 321.2 L1864.7 314.4 L1867.9 320.0 L1871.1 314.7 L1874.4 325.1 L1877.6 313.2 L1880.9 318.2 L1884.1 314.1 L1887.3 324.9 L1890.6 314.1 L1893.8 313.1 L1895.6 334.5 L1897.8 339.0 L1900.0 339.1 L1902.3 351.5 L1904.5 357.6 L1906.9 366.1 L1909.2 376.6 L1911.6 383.4 L1914.0 385.0 L1916.3 400.2 L1918.7 407.4 L1921.3 413.1 L1924.0 419.8 L1927.6 457.2 L1930.1 493.0 L1932.6 516.6 L1935.0 558.7 L1937.5 590.5 L1940.0 624.3 L1942.5 629.3 L1945.0 635.4 L1947.5 653.0 L1950.0 651.5 L1952.5 659.9 L1954.7 667.4 L1957.0 677.7 L1959.2 686.7 L1961.4 699.0 L1963.9 717.3 L1966.4 720.2 L1968.8 734.4 L1971.3 741.7 L1973.8 754.1 L1974.5 755.9 L2008.7 755.9 L2011.7 735.6 L2014.7 720.3 L2017.4 699.5 L2020.1 683.0 L2022.7 663.0 L2025.4 645.6 L2027.7 630.1 L2030.0 621.9 L2032.3 602.9 L2034.5 585.8 L2036.8 582.0 L2039.1 567.1 L2041.4 551.4 L2045.0 562.5 L2048.5 555.8 L2052.1 567.0 L2055.6 558.1 L2059.1 566.1 L2062.7 560.3 L2065.0 555.1 L2067.3 549.0 L2069.6 538.1 L2071.8 526.4 L2074.1 519.1 L2076.4 509.2 L2078.7 506.9 L2081.4 498.7 L2084.1 494.4 L2086.7 477.9 L2089.4 467.8 L2092.1 467.3 L2094.8 450.1 L2097.4 442.4 L2100.1 439.4 L2102.5 433.0 L2104.8 422.8 L2107.2 418.7 L2109.6 410.3 L2111.9 399.1 L2114.3 396.7 L2116.5 389.5 L2118.8 378.1 L2121.0 366.2 L2123.2 357.6 L2125.7 348.0 L2128.2 352.6 L2130.6 342.4 L2133.1 326.2 L2135.6 327.3 L2138.8 334.7 L2142.0 327.2 L2145.2 335.6 L2148.4 324.2 L2151.6 333.2 L2154.8 322.5 L2158.0 330.7 L2161.2 321.2 L2164.4 330.3 L2167.6 318.5 L2170.1 315.6 L2172.6 326.0 L2175.1 326.9 L2177.6 339.0 L2180.1 339.8 L2182.3 346.9 L2184.6 353.4 L2186.8 370.5 L2189.0 375.4 L2191.4 379.5 L2193.7 385.0 L2196.1 393.1 L2198.6 403.6 L2201.1 405.4 L2203.6 412.6 L2206.1 425.9 L2208.6 434.0 L2212.1 467.8 L2214.5 498.5 L2216.8 536.9 L2219.2 558.8 L2221.6 593.3 L2223.9 620.9 L2226.3 652.8 L2228.8 662.2 L2231.3 670.9 L2233.8 674.8 L2236.3 682.0 L2238.8 691.9 L2241.2 705.5 L2243.5 711.4 L2245.9 716.2 L2248.3 733.4 L2250.6 744.8 L2253.0 754.1 L2253.5 755.9 L2286.8 755.9 L2289.5 737.2 L2292.2 718.0 L2294.8 697.4 L2297.5 681.2 L2300.0 666.5 L2302.5 648.9 L2304.9 633.9 L2307.4 617.7 L2309.9 603.0 L2312.6 584.9 L2315.2 573.5 L2317.9 558.5 L2320.6 540.7 L2323.9 551.2 L2327.2 543.5 L2330.5 549.3 L2333.8 543.5 L2337.1 551.0 L2340.4 545.8 L2343.7 544.3 L2346.1 537.0 L2348.4 531.0 L2350.8 521.2 L2353.2 517.3 L2355.5 502.9 L2357.9 503.2 L2360.3 497.4 L2362.6 492.7 L2365.0 487.4 L2367.4 478.1 L2369.9 473.3 L2372.3 461.0 L2374.8 460.8 L2377.2 443.7 L2379.7 433.6 L2382.2 437.4 L2384.6 425.1 L2386.8 416.9 L2389.1 418.1 L2391.3 414.6 L2393.5 407.4 L2396.0 397.4 L2398.5 390.6 L2400.9 376.8 L2403.4 370.9 L2405.9 366.5 L2408.3 353.8 L2410.6 352.1 L2413.0 346.9 L2416.6 353.6 L2420.2 343.2 L2423.7 346.4 L2427.3 338.0 L2430.6 345.0 L2434.0 340.2 L2437.3 352.0 L2440.7 342.5 L2444.0 349.0 L2447.3 345.1 L2450.7 356.2 L2454.0 345.1 L2456.4 353.7 L2458.7 363.1 L2461.1 371.8 L2463.6 377.6 L2466.1 387.7 L2468.5 394.0 L2471.0 404.6 L2473.5 410.9 L2476.0 414.2 L2478.5 425.6 L2481.0 434.7 L2483.5 435.1 L2486.0 442.9 L2488.2 466.1 L2490.4 495.9 L2492.7 517.2 L2494.9 538.9 L2497.3 580.4 L2499.6 610.7 L2502.0 645.6 L2504.7 664.9 L2507.3 688.3 L2509.7 689.8 L2512.0 702.3 L2514.4 711.4 L2516.8 714.9 L2519.1 724.9 L2521.5 731.0 L2525.1 754.1 L2526.2 755.9 L2564.2 755.9 L2566.6 745.2 L2568.9 727.3 L2571.3 716.8 L2573.5 708.8 L2575.8 688.3 L2578.0 670.2 L2580.2 656.3 L2582.9 638.9 L2585.6 619.4 L2588.2 601.3 L2590.9 592.3 L2593.3 577.9 L2595.6 559.4 L2598.0 546.0 L2601.2 552.4 L2604.4 549.1 L2607.6 559.3 L2610.8 551.8 L2614.0 553.2" fill="none" stroke="#fbc87c" stroke-width="2.2" stroke-linejoin="miter" stroke-miterlimit="3"/></svg><div class="t" style="left:869.40px;top:825.26px;font-size:20.25px;line-height:20.25px;color:#1f2226;font-weight:400;font-family:'Liberation Sans', sans-serif;transform:scaleX(0.9376);">ACTIVE</div><div class="t" style="left:845.11px;top:1272.96px;font-size:20.25px;line-height:20.25px;color:#1f2226;font-weight:400;font-family:'Liberation Sans', sans-serif;transform:scaleX(0.9956);">INACTIVE</div><div class="b" style="left:944px;top:835px;width:12px;height:2px;background:#1f6893;border-radius:0px;"></div><div class="b" style="left:944px;top:1282.5px;width:12px;height:2px;background:#1f6893;border-radius:0px;"></div><svg class="s" style="left:0px;top:0px;" width="2700" height="1740" viewBox="0 0 2700 1740"><path d="M956 1283.5 V836 H1141 V1283.5 H1174.8 V836 H1418.6 V1283.5 H1453.2 V836 H1696.3 V1283.5 H1730.9 V836 H1974 V1283.5 H2008.5 V836 H2251.6 V1283.5 H2286.2 V836 H2530 V1283.5 H2564.7 V836 H2614" fill="none" stroke="#1f6893" stroke-width="2.4"/></svg><div class="b" style="left:955px;top:1290.5px;width:1659px;height:2.6px;background:#1f2226;border-radius:0px;"></div><div class="b" style="left:955px;top:1290.5px;width:2px;height:10px;background:#1f2226;border-radius:0px;"></div><div class="b" style="left:2612px;top:1290.5px;width:2px;height:10px;background:#1f2226;border-radius:0px;"></div><div class="b" style="left:990.5px;top:1290.5px;width:2px;height:10px;background:#1f2226;border-radius:0px;"></div><div class="t" style="left:965.68px;top:1303.46px;font-size:20.25px;line-height:20.25px;color:#1f2226;font-weight:400;font-family:'Liberation Sans', sans-serif;transform:scaleX(1.0225);">08:00</div><div class="b" style="left:1196.33px;top:1290.5px;width:2px;height:10px;background:#1f2226;border-radius:0px;"></div><div class="t" style="left:1171.51px;top:1303.46px;font-size:20.25px;line-height:20.25px;color:#1f2226;font-weight:400;font-family:'Liberation Sans', sans-serif;transform:scaleX(1.0225);">09:00</div><div class="b" style="left:1402.16px;top:1290.5px;width:2px;height:10px;background:#1f2226;border-radius:0px;"></div><div class="t" style="left:1376.60px;top:1303.46px;font-size:20.25px;line-height:20.25px;color:#1f2226;font-weight:400;font-family:'Liberation Sans', sans-serif;transform:scaleX(1.0373);">10:00</div><div class="b" style="left:1607.99px;top:1290.5px;width:2px;height:10px;background:#1f2226;border-radius:0px;"></div><div class="t" style="left:1582.43px;top:1303.46px;font-size:20.25px;line-height:20.25px;color:#1f2226;font-weight:400;font-family:'Liberation Sans', sans-serif;transform:scaleX(1.0373);">11:00</div><div class="b" style="left:1813.8200000000002px;top:1290.5px;width:2px;height:10px;background:#1f2226;border-radius:0px;"></div><div class="t" style="left:1788.26px;top:1303.46px;font-size:20.25px;line-height:20.25px;color:#1f2226;font-weight:400;font-family:'Liberation Sans', sans-serif;transform:scaleX(1.0373);">12:00</div><div class="b" style="left:2019.65px;top:1290.5px;width:2px;height:10px;background:#1f2226;border-radius:0px;"></div><div class="t" style="left:1994.09px;top:1303.46px;font-size:20.25px;line-height:20.25px;color:#1f2226;font-weight:400;font-family:'Liberation Sans', sans-serif;transform:scaleX(1.0373);">13:00</div><div class="b" style="left:2225.48px;top:1290.5px;width:2px;height:10px;background:#1f2226;border-radius:0px;"></div><div class="t" style="left:2199.92px;top:1303.46px;font-size:20.25px;line-height:20.25px;color:#1f2226;font-weight:400;font-family:'Liberation Sans', sans-serif;transform:scaleX(1.0373);">14:00</div><div class="b" style="left:2431.3100000000004px;top:1290.5px;width:2px;height:10px;background:#1f2226;border-radius:0px;"></div><div class="t" style="left:2405.75px;top:1303.46px;font-size:20.25px;line-height:20.25px;color:#1f2226;font-weight:400;font-family:'Liberation Sans', sans-serif;transform:scaleX(1.0373);">15:00</div><div class="b" style="left:956px;top:1340.5px;width:63.5px;height:63.0px;background:#fff;border:2px solid #dedede;border-radius:6px;"></div><svg class="s" style="left:979px;top:1364px;" width="10" height="16" viewBox="0 0 10 16"><path d="M9 0 L1 8 L9 16 Z" fill="#555"/></svg><div class="b" style="left:1028.5px;top:1340.5px;width:251.0px;height:63.0px;background:#fff;border:2px solid #dedede;border-radius:6px;"></div><div class="t" style="left:1052.64px;top:1358.78px;font-size:30.5px;line-height:30.5px;color:#1f2226;font-weight:400;font-family:'Liberation Sans', sans-serif;transform:scaleX(1.0268);">13/10/2023</div><svg class="s" style="left:1233px;top:1355px;" width="28" height="31" viewBox="0 0 28 31"><rect x="1.5" y="3.5" width="25" height="26" rx="2" fill="none" stroke="#999" stroke-width="2.6"/><line x1="1.5" y1="10" x2="26.5" y2="10" stroke="#999" stroke-width="2.6"/><line x1="7.5" y1="0" x2="7.5" y2="6" stroke="#999" stroke-width="2.6"/><line x1="20.5" y1="0" x2="20.5" y2="6" stroke="#999" stroke-width="2.6"/><rect x="16" y="18" width="7" height="7" fill="#999"/></svg><div class="b" style="left:1288.5px;top:1340.5px;width:279.0px;height:63.0px;background:#fff;border:2px solid #dedede;border-radius:6px;"></div><div class="t" style="left:1312.86px;top:1358.78px;font-size:30.5px;line-height:30.5px;color:#1f2226;font-weight:400;font-family:'Liberation Sans', sans-serif;transform:scaleX(0.9510);">07:49:31</div><svg class="s" style="left:1521px;top:1358px;" width="28" height="28" viewBox="0 0 28 28"><circle cx="14" cy="14" r="12.3" fill="none" stroke="#999" stroke-width="2.4"/><polyline points="13,6.5 13,15.5 20.5,15.5" fill="none" stroke="#999" stroke-width="2.4"/></svg><div class="b" style="left:1598.5px;top:1340.5px;width:62.5px;height:63.0px;background:#fff;border:2px solid #dedede;border-radius:6px;"></div><svg class="s" style="left:1613px;top:1356px;" width="34" height="33" viewBox="0 0 34 33"><path d="M2 1 V31.5 H33" fill="none" stroke="#999" stroke-width="2.2"/><path d="M3 30 H9 V26 H15 V22 H21 V18 H31" fill="none" stroke="#999" stroke-width="2"/><path d="M3 19 Q8 12 16 12 Q24 12 26 6 L31 4" fill="none" stroke="#999" stroke-width="2.6"/></svg><div class="b" style="left:1670.5px;top:1340.5px;width:228.5px;height:63.0px;background:#fff;border:2px solid #dedede;border-radius:6px;"></div><div class="b" style="left:1836px;top:1342.5px;width:2px;height:59px;background:#dedede;border-radius:0px;"></div><div class="t" style="left:1695.89px;top:1358.78px;font-size:30.5px;line-height:30.5px;color:#1f2226;font-weight:400;font-family:'Liberation Sans', sans-serif;transform:scaleX(0.9145);">± 8 hours</div><svg class="s" style="left:1856px;top:1356px;" width="24" height="30" viewBox="0 0 24 30"><path d="M5.5 13 V8.5 Q5.5 2 12 2 Q18.5 2 18.5 8.5" fill="none" stroke="#555" stroke-width="3"/><rect x="2" y="13" width="20" height="15.5" rx="2" fill="none" stroke="#555" stroke-width="3"/><circle cx="12" cy="20.5" r="2.3" fill="#555"/></svg><div class="b" style="left:1908.5px;top:1340.5px;width:63.0px;height:63.0px;background:#fff;border:2px solid #dedede;border-radius:6px;"></div><svg class="s" style="left:1924px;top:1356px;" width="32" height="30" viewBox="0 0 32 30"><path d="M6 15 A11.5 11.5 0 1 1 9.5 23.2" fill="none" stroke="#555" stroke-width="3"/><path d="M1 13 L6 19 L11 13 Z" fill="#555"/><polyline points="17.5,8.5 17.5,15.5 22.5,19.5" fill="none" stroke="#555" stroke-width="3"/></svg><div class="b" style="left:2002.5px;top:1340.5px;width:251.0px;height:63.0px;background:#fff;border:2px solid #dedede;border-radius:6px;"></div><div class="t" style="left:2026.95px;top:1358.78px;font-size:30.5px;line-height:30.5px;color:#1f2226;font-weight:400;font-family:'Liberation Sans', sans-serif;transform:scaleX(1.0228);">13/10/2023</div><svg class="s" style="left:2207.5px;top:1355px;" width="28" height="31" viewBox="0 0 28 31"><rect x="1.5" y="3.5" width="25" height="26" rx="2" fill="none" stroke="#999" stroke-width="2.6"/><line x1="1.5" y1="10" x2="26.5" y2="10" stroke="#999" stroke-width="2.6"/><line x1="7.5" y1="0" x2="7.5" y2="6" stroke="#999" stroke-width="2.6"/><line x1="20.5" y1="0" x2="20.5" y2="6" stroke="#999" stroke-width="2.6"/><rect x="16" y="18" width="7" height="7" fill="#999"/></svg><div class="b" style="left:2262.5px;top:1340.5px;width:279.0px;height:63.0px;background:#fff;border:2px solid #dedede;border-radius:6px;"></div><div class="t" style="left:2286.82px;top:1358.78px;font-size:30.5px;line-height:30.5px;color:#1f2226;font-weight:400;font-family:'Liberation Sans', sans-serif;transform:scaleX(0.9462);">15:52:51</div><svg class="s" style="left:2495px;top:1358px;" width="28" height="28" viewBox="0 0 28 28"><circle cx="14" cy="14" r="12.3" fill="none" stroke="#999" stroke-width="2.4"/><polyline points="13,6.5 13,15.5 20.5,15.5" fill="none" stroke="#999" stroke-width="2.4"/></svg><div class="b" style="left:2550.5px;top:1340.5px;width:63.0px;height:63.0px;background:#fff;border:2px solid #dedede;border-radius:6px;"></div><svg class="s" style="left:2578px;top:1364px;" width="10" height="16" viewBox="0 0 10 16"><path d="M1 0 L9 8 L1 16 Z" fill="#555"/></svg><div class="b" style="left:956px;top:1419px;width:1658px;height:2px;background:#e2e2e2;border-radius:0px;"></div><div class="b" style="left:956px;top:1478.5px;width:1658px;height:2px;background:#e2e2e2;border-radius:0px;"></div><svg class="s" style="left:0px;top:0px;" width="2700" height="1740" viewBox="0 0 2700 1740"><path d="M956.0 1424.0 L972.0 1476.0 L988.0 1424.0 L1004.0 1476.0 L1010.0 1424.0 L1015.0 1476.0 L1031.0 1424.0 L1036.0 1476.0 L1040.0 1424.0 L1056.0 1476.0 L1063.0 1424.0 L1068.0 1476.0 L1072.0 1424.0 L1075.0 1476.0 L1087.0 1424.0 L1103.0 1476.0 L1108.0 1424.0 L1111.0 1476.0 L1115.0 1424.0 L1118.0 1476.0 L1121.0 1424.0 L1127.0 1476.0 L1133.0 1424.0 L1136.0 1476.0 L1152.0 1424.0 L1161.0 1476.0 L1177.0 1424.0 L1183.0 1476.0 L1189.0 1424.0 L1196.0 1476.0 L1212.0 1424.0 L1215.0 1476.0 L1219.0 1424.0 L1235.0 1476.0 L1242.0 1424.0 L1254.0 1476.0 L1258.0 1424.0 L1265.0 1476.0 L1274.0 1424.0 L1280.0 1476.0 L1287.0 1424.0 L1290.0 1476.0 L1294.0 1424.0 L1298.0 1476.0 L1310.0 1424.0 L1314.0 1476.0 L1321.0 1424.0 L1333.0 1476.0 L1337.0 1424.0 L1340.0 1476.0 L1343.0 1424.0 L1349.0 1476.0 L1355.0 1424.0 L1358.0 1476.0 L1374.0 1424.0 L1386.0 1476.0 L1398.0 1424.0 L1410.0 1476.0 L1414.0 1424.0 L1420.0 1476.0 L1427.0 1424.0 L1436.0 1476.0 L1440.0 1424.0 L1447.0 1476.0 L1456.0 1424.0 L1459.0 1476.0 L1471.0 1424.0 L1475.0 1476.0 L1480.0 1424.0 L1486.0 1476.0 L1490.0 1424.0 L1493.0 1476.0 L1496.0 1424.0 L1512.0 1476.0 L1528.0 1424.0 L1533.0 1476.0 L1539.0 1424.0 L1555.0 1476.0 L1561.0 1424.0 L1566.0 1476.0 L1578.0 1424.0 L1590.0 1476.0 L1594.0 1424.0 L1606.0 1476.0 L1618.0 1424.0 L1624.0 1476.0 L1627.0 1424.0 L1634.0 1476.0 L1641.0 1424.0 L1644.0 1476.0 L1650.0 1424.0 L1655.0 1476.0 L1667.0 1424.0 L1671.0 1476.0 L1674.0 1424.0 L1679.0 1476.0 L1685.0 1424.0 L1701.0 1476.0 L1708.0 1424.0 L1711.0 1476.0 L1720.0 1424.0 L1727.0 1476.0 L1739.0 1424.0 L1743.0 1476.0 L1747.0 1424.0 L1751.0 1476.0 L1757.0 1424.0 L1763.0 1476.0 L1766.0 1424.0 L1775.0 1476.0 L1784.0 1424.0 L1800.0 1476.0 L1805.0 1424.0 L1821.0 1476.0 L1826.0 1424.0 L1838.0 1476.0 L1843.0 1424.0 L1848.0 1476.0 L1855.0 1424.0 L1861.0 1476.0 L1867.0 1424.0 L1873.0 1476.0 L1878.0 1424.0 L1884.0 1476.0 L1896.0 1424.0 L1912.0 1476.0 L1916.0 1424.0 L1928.0 1476.0 L1931.0 1424.0 L1935.0 1476.0 L1939.0 1424.0 L1942.0 1476.0 L1949.0 1424.0 L1955.0 1476.0 L1967.0 1424.0 L1974.0 1476.0 L1986.0 1424.0 L2002.0 1476.0 L2009.0 1424.0 L2014.0 1476.0 L2018.0 1424.0 L2023.0 1476.0 L2029.0 1424.0 L2045.0 1476.0 L2049.0 1424.0 L2056.0 1476.0 L2062.0 1424.0 L2068.0 1476.0 L2071.0 1424.0 L2075.0 1476.0 L2082.0 1424.0 L2094.0 1476.0 L2110.0 1424.0 L2116.0 1476.0 L2119.0 1424.0 L2122.0 1476.0 L2127.0 1424.0 L2134.0 1476.0 L2143.0 1424.0 L2148.0 1476.0 L2152.0 1424.0 L2161.0 1476.0 L2166.0 1424.0 L2182.0 1476.0 L2191.0 1424.0 L2196.0 1476.0 L2199.0 1424.0 L2202.0 1476.0 L2218.0 1424.0 L2227.0 1476.0 L2234.0 1424.0 L2237.0 1476.0 L2240.0 1424.0 L2244.0 1476.0 L2260.0 1424.0 L2264.0 1476.0 L2271.0 1424.0 L2280.0 1476.0 L2285.0 1424.0 L2289.0 1476.0 L2293.0 1424.0 L2309.0 1476.0 L2318.0 1424.0 L2321.0 1476.0 L2326.0 1424.0 L2335.0 1476.0 L2344.0 1424.0 L2348.0 1476.0 L2364.0 1424.0 L2368.0 1476.0 L2380.0 1424.0 L2383.0 1476.0 L2399.0 1424.0 L2402.0 1476.0 L2414.0 1424.0 L2426.0 1476.0 L2429.0 1424.0 L2433.0 1476.0 L2437.0 1424.0 L2441.0 1476.0 L2445.0 1424.0 L2452.0 1476.0 L2464.0 1424.0 L2473.0 1476.0 L2485.0 1424.0 L2501.0 1476.0 L2517.0 1424.0 L2533.0 1476.0 L2537.0 1424.0 L2540.0 1476.0 L2547.0 1424.0 L2551.0 1476.0 L2567.0 1424.0 L2570.0 1476.0 L2576.0 1424.0 L2580.0 1476.0 L2596.0 1424.0" fill="none" stroke="#fcd69c" stroke-width="2.2"/><path d="M956.00 1422 V1477.5 M961.55 1422 V1477.5 M967.10 1422 V1477.5 M972.65 1422 V1477.5 M978.20 1422 V1477.5 M983.75 1422 V1477.5 M989.30 1422 V1477.5 M994.85 1422 V1477.5 M1000.40 1422 V1477.5 M1005.95 1422 V1477.5 M1011.50 1422 V1477.5 M1017.05 1422 V1477.5 M1022.60 1422 V1477.5 M1028.15 1422 V1477.5 M1033.70 1422 V1477.5 M1039.25 1422 V1477.5 M1044.80 1422 V1477.5 M1050.35 1422 V1477.5 M1055.90 1422 V1477.5 M1061.45 1422 V1477.5 M1067.00 1422 V1477.5 M1072.55 1422 V1477.5 M1078.10 1422 V1477.5 M1083.65 1422 V1477.5 M1089.20 1422 V1477.5 M1094.75 1422 V1477.5 M1100.30 1422 V1477.5 M1105.85 1422 V1477.5 M1111.40 1422 V1477.5 M1116.95 1422 V1477.5 M1122.50 1422 V1477.5 M1128.05 1422 V1477.5 M1133.60 1422 V1477.5 M1139.15 1422 V1477.5 M1144.70 1422 V1477.5 M1150.25 1422 V1477.5 M1155.80 1422 V1477.5 M1161.35 1422 V1477.5 M1166.90 1422 V1477.5 M1172.45 1422 V1477.5 M1178.00 1422 V1477.5 M1183.55 1422 V1477.5 M1189.10 1422 V1477.5 M1194.65 1422 V1477.5 M1200.20 1422 V1477.5 M1205.75 1422 V1477.5 M1211.30 1422 V1477.5 M1216.85 1422 V1477.5 M1222.40 1422 V1477.5 M1227.95 1422 V1477.5 M1233.50 1422 V1477.5 M1239.05 1422 V1477.5 M1244.60 1422 V1477.5 M1250.15 1422 V1477.5 M1255.70 1422 V1477.5 M1261.25 1422 V1477.5 M1266.80 1422 V1477.5 M1272.35 1422 V1477.5 M1277.90 1422 V1477.5 M1283.45 1422 V1477.5 M1289.00 1422 V1477.5 M1294.55 1422 V1477.5 M1300.10 1422 V1477.5 M1305.65 1422 V1477.5 M1311.20 1422 V1477.5 M1316.75 1422 V1477.5 M1322.30 1422 V1477.5 M1327.85 1422 V1477.5 M1333.40 1422 V1477.5 M1338.95 1422 V1477.5 M1344.50 1422 V1477.5 M1350.05 1422 V1477.5 M1355.60 1422 V1477.5 M1361.15 1422 V1477.5 M1366.70 1422 V1477.5 M1372.25 1422 V1477.5 M1377.80 1422 V1477.5 M1383.35 1422 V1477.5 M1388.90 1422 V1477.5 M1394.45 1422 V1477.5 M1400.00 1422 V1477.5 M1405.55 1422 V1477.5 M1411.10 1422 V1477.5 M1416.65 1422 V1477.5 M1422.20 1422 V1477.5 M1427.75 1422 V1477.5 M1433.30 1422 V1477.5 M1438.85 1422 V1477.5 M1444.40 1422 V1477.5 M1449.95 1422 V1477.5 M1455.50 1422 V1477.5 M1461.05 1422 V1477.5 M1466.60 1422 V1477.5 M1472.15 1422 V1477.5 M1477.70 1422 V1477.5 M1483.25 1422 V1477.5 M1488.80 1422 V1477.5 M1494.35 1422 V1477.5 M1499.90 1422 V1477.5 M1505.45 1422 V1477.5 M1511.00 1422 V1477.5 M1516.55 1422 V1477.5 M1522.10 1422 V1477.5 M1527.65 1422 V1477.5 M1533.20 1422 V1477.5 M1538.75 1422 V1477.5 M1544.30 1422 V1477.5 M1549.85 1422 V1477.5 M1555.40 1422 V1477.5 M1560.95 1422 V1477.5 M1566.50 1422 V1477.5 M1572.05 1422 V1477.5 M1577.60 1422 V1477.5 M1583.15 1422 V1477.5 M1588.70 1422 V1477.5 M1594.25 1422 V1477.5 M1599.80 1422 V1477.5 M1605.35 1422 V1477.5 M1610.90 1422 V1477.5 M1616.45 1422 V1477.5 M1622.00 1422 V1477.5 M1627.55 1422 V1477.5 M1633.10 1422 V1477.5 M1638.65 1422 V1477.5 M1644.20 1422 V1477.5 M1649.75 1422 V1477.5 M1655.30 1422 V1477.5 M1660.85 1422 V1477.5 M1666.40 1422 V1477.5 M1671.95 1422 V1477.5 M1677.50 1422 V1477.5 M1683.05 1422 V1477.5 M1688.60 1422 V1477.5 M1694.15 1422 V1477.5 M1699.70 1422 V1477.5 M1705.25 1422 V1477.5 M1710.80 1422 V1477.5 M1716.35 1422 V1477.5 M1721.90 1422 V1477.5 M1727.45 1422 V1477.5 M1733.00 1422 V1477.5 M1738.55 1422 V1477.5 M1744.10 1422 V1477.5 M1749.65 1422 V1477.5 M1755.20 1422 V1477.5 M1760.75 1422 V1477.5 M1766.30 1422 V1477.5 M1771.85 1422 V1477.5 M1777.40 1422 V1477.5 M1782.95 1422 V1477.5 M1788.50 1422 V1477.5 M1794.05 1422 V1477.5 M1799.60 1422 V1477.5 M1805.15 1422 V1477.5 M1810.70 1422 V1477.5 M1816.25 1422 V1477.5 M1821.80 1422 V1477.5 M1827.35 1422 V1477.5 M1832.90 1422 V1477.5 M1838.45 1422 V1477.5 M1844.00 1422 V1477.5 M1849.55 1422 V1477.5 M1855.10 1422 V1477.5 M1860.65 1422 V1477.5 M1866.20 1422 V1477.5 M1871.75 1422 V1477.5 M1877.30 1422 V1477.5 M1882.85 1422 V1477.5 M1888.40 1422 V1477.5 M1893.95 1422 V1477.5 M1899.50 1422 V1477.5 M1905.05 1422 V1477.5 M1910.60 1422 V1477.5 M1916.15 1422 V1477.5 M1921.70 1422 V1477.5 M1927.25 1422 V1477.5 M1932.80 1422 V1477.5 M1938.35 1422 V1477.5 M1943.90 1422 V1477.5 M1949.45 1422 V1477.5 M1955.00 1422 V1477.5 M1960.55 1422 V1477.5 M1966.10 1422 V1477.5 M1971.65 1422 V1477.5 M1977.20 1422 V1477.5 M1982.75 1422 V1477.5 M1988.30 1422 V1477.5 M1993.85 1422 V1477.5 M1999.40 1422 V1477.5 M2004.95 1422 V1477.5 M2010.50 1422 V1477.5 M2016.05 1422 V1477.5 M2021.60 1422 V1477.5 M2027.15 1422 V1477.5 M2032.70 1422 V1477.5 M2038.25 1422 V1477.5 M2043.80 1422 V1477.5 M2049.35 1422 V1477.5 M2054.90 1422 V1477.5 M2060.45 1422 V1477.5 M2066.00 1422 V1477.5 M2071.55 1422 V1477.5 M2077.10 1422 V1477.5 M2082.65 1422 V1477.5 M2088.20 1422 V1477.5 M2093.75 1422 V1477.5 M2099.30 1422 V1477.5 M2104.85 1422 V1477.5 M2110.40 1422 V1477.5 M2115.95 1422 V1477.5 M2121.50 1422 V1477.5 M2127.05 1422 V1477.5 M2132.60 1422 V1477.5 M2138.15 1422 V1477.5 M2143.70 1422 V1477.5 M2149.25 1422 V1477.5 M2154.80 1422 V1477.5 M2160.35 1422 V1477.5 M2165.90 1422 V1477.5 M2171.45 1422 V1477.5 M2177.00 1422 V1477.5 M2182.55 1422 V1477.5 M2188.10 1422 V1477.5 M2193.65 1422 V1477.5 M2199.20 1422 V1477.5 M2204.75 1422 V1477.5 M2210.30 1422 V1477.5 M2215.85 1422 V1477.5 M2221.40 1422 V1477.5 M2226.95 1422 V1477.5 M2232.50 1422 V1477.5 M2238.05 1422 V1477.5 M2243.60 1422 V1477.5 M2249.15 1422 V1477.5 M2254.70 1422 V1477.5 M2260.25 1422 V1477.5 M2265.80 1422 V1477.5 M2271.35 1422 V1477.5 M2276.90 1422 V1477.5 M2282.45 1422 V1477.5 M2288.00 1422 V1477.5 M2293.55 1422 V1477.5 M2299.10 1422 V1477.5 M2304.65 1422 V1477.5 M2310.20 1422 V1477.5 M2315.75 1422 V1477.5 M2321.30 1422 V1477.5 M2326.85 1422 V1477.5 M2332.40 1422 V1477.5 M2337.95 1422 V1477.5 M2343.50 1422 V1477.5 M2349.05 1422 V1477.5 M2354.60 1422 V1477.5 M2360.15 1422 V1477.5 M2365.70 1422 V1477.5 M2371.25 1422 V1477.5 M2376.80 1422 V1477.5 M2382.35 1422 V1477.5 M2387.90 1422 V1477.5 M2393.45 1422 V1477.5 M2399.00 1422 V1477.5 M2404.55 1422 V1477.5 M2410.10 1422 V1477.5 M2415.65 1422 V1477.5 M2421.20 1422 V1477.5 M2426.75 1422 V1477.5 M2432.30 1422 V1477.5 M2437.85 1422 V1477.5 M2443.40 1422 V1477.5 M2448.95 1422 V1477.5 M2454.50 1422 V1477.5 M2460.05 1422 V1477.5 M2465.60 1422 V1477.5 M2471.15 1422 V1477.5 M2476.70 1422 V1477.5 M2482.25 1422 V1477.5 M2487.80 1422 V1477.5 M2493.35 1422 V1477.5 M2498.90 1422 V1477.5 M2504.45 1422 V1477.5 M2510.00 1422 V1477.5 M2515.55 1422 V1477.5 M2521.10 1422 V1477.5 M2526.65 1422 V1477.5 M2532.20 1422 V1477.5 M2537.75 1422 V1477.5 M2543.30 1422 V1477.5 M2548.85 1422 V1477.5 M2554.40 1422 V1477.5 M2559.95 1422 V1477.5 M2565.50 1422 V1477.5 M2571.05 1422 V1477.5 M2576.60 1422 V1477.5 M2582.15 1422 V1477.5 M2587.70 1422 V1477.5 M2593.25 1422 V1477.5 M2598.80 1422 V1477.5 M2604.35 1422 V1477.5 " fill="none" stroke="#3a86b2" stroke-width="2"/><path d="M955.20 1422 H962.35 M966.30 1422 H973.45 M971.85 1422 H979.00 M977.40 1422 H984.55 M982.95 1422 H990.10 M994.05 1422 H1001.20 M999.60 1422 H1006.75 M1005.15 1422 H1012.30 M1010.70 1422 H1017.85 M1016.25 1422 H1023.40 M1021.80 1422 H1028.95 M1027.35 1422 H1034.50 M1038.45 1422 H1045.60 M1044.00 1422 H1051.15 M1049.55 1422 H1056.70 M1055.10 1422 H1062.25 M1060.65 1422 H1067.80 M1066.20 1422 H1073.35 M1071.75 1422 H1078.90 M1077.30 1422 H1084.45 M1088.40 1422 H1095.55 M1093.95 1422 H1101.10 M1099.50 1422 H1106.65 M1105.05 1422 H1112.20 M1110.60 1422 H1117.75 M1116.15 1422 H1123.30 M1121.70 1422 H1128.85 M1132.80 1422 H1139.95 M1138.35 1422 H1145.50 M1143.90 1422 H1151.05 M1149.45 1422 H1156.60 M1155.00 1422 H1162.15 M1160.55 1422 H1167.70 M1166.10 1422 H1173.25 M1171.65 1422 H1178.80 M1177.20 1422 H1184.35 M1182.75 1422 H1189.90 M1188.30 1422 H1195.45 M1199.40 1422 H1206.55 M1210.50 1422 H1217.65 M1216.05 1422 H1223.20 M1227.15 1422 H1234.30 M1232.70 1422 H1239.85 M1238.25 1422 H1245.40 M1243.80 1422 H1250.95 M1249.35 1422 H1256.50 M1260.45 1422 H1267.60 M1271.55 1422 H1278.70 M1277.10 1422 H1284.25 M1288.20 1422 H1295.35 M1293.75 1422 H1300.90 M1299.30 1422 H1306.45 M1310.40 1422 H1317.55 M1321.50 1422 H1328.65 M1327.05 1422 H1334.20 M1332.60 1422 H1339.75 M1338.15 1422 H1345.30 M1343.70 1422 H1350.85 M1349.25 1422 H1356.40 M1354.80 1422 H1361.95 M1360.35 1422 H1367.50 M1371.45 1422 H1378.60 M1377.00 1422 H1384.15 M1388.10 1422 H1395.25 M1399.20 1422 H1406.35 M1404.75 1422 H1411.90 M1410.30 1422 H1417.45 M1421.40 1422 H1428.55 M1426.95 1422 H1434.10 M1432.50 1422 H1439.65 M1438.05 1422 H1445.20 M1443.60 1422 H1450.75 M1449.15 1422 H1456.30 M1454.70 1422 H1461.85 M1460.25 1422 H1467.40 M1465.80 1422 H1472.95 M1471.35 1422 H1478.50 M1482.45 1422 H1489.60 M1488.00 1422 H1495.15 M1493.55 1422 H1500.70 M1504.65 1422 H1511.80 M1510.20 1422 H1517.35 M1515.75 1422 H1522.90 M1521.30 1422 H1528.45 M1526.85 1422 H1534.00 M1532.40 1422 H1539.55 M1537.95 1422 H1545.10 M1543.50 1422 H1550.65 M1549.05 1422 H1556.20 M1554.60 1422 H1561.75 M1560.15 1422 H1567.30 M1565.70 1422 H1572.85 M1571.25 1422 H1578.40 M1576.80 1422 H1583.95 M1582.35 1422 H1589.50 M1587.90 1422 H1595.05 M1593.45 1422 H1600.60 M1599.00 1422 H1606.15 M1604.55 1422 H1611.70 M1610.10 1422 H1617.25 M1615.65 1422 H1622.80 M1621.20 1422 H1628.35 M1626.75 1422 H1633.90 M1632.30 1422 H1639.45 M1637.85 1422 H1645.00 M1643.40 1422 H1650.55 M1654.50 1422 H1661.65 M1660.05 1422 H1667.20 M1665.60 1422 H1672.75 M1671.15 1422 H1678.30 M1676.70 1422 H1683.85 M1687.80 1422 H1694.95 M1693.35 1422 H1700.50 M1704.45 1422 H1711.60 M1710.00 1422 H1717.15 M1721.10 1422 H1728.25 M1726.65 1422 H1733.80 M1732.20 1422 H1739.35 M1743.30 1422 H1750.45 M1754.40 1422 H1761.55 M1759.95 1422 H1767.10 M1765.50 1422 H1772.65 M1771.05 1422 H1778.20 M1776.60 1422 H1783.75 M1782.15 1422 H1789.30 M1787.70 1422 H1794.85 M1793.25 1422 H1800.40 M1804.35 1422 H1811.50 M1809.90 1422 H1817.05 M1815.45 1422 H1822.60 M1821.00 1422 H1828.15 M1826.55 1422 H1833.70 M1832.10 1422 H1839.25 M1837.65 1422 H1844.80 M1843.20 1422 H1850.35 M1848.75 1422 H1855.90 M1854.30 1422 H1861.45 M1859.85 1422 H1867.00 M1865.40 1422 H1872.55 M1870.95 1422 H1878.10 M1876.50 1422 H1883.65 M1882.05 1422 H1889.20 M1887.60 1422 H1894.75 M1893.15 1422 H1900.30 M1898.70 1422 H1905.85 M1904.25 1422 H1911.40 M1909.80 1422 H1916.95 M1915.35 1422 H1922.50 M1920.90 1422 H1928.05 M1932.00 1422 H1939.15 M1937.55 1422 H1944.70 M1943.10 1422 H1950.25 M1948.65 1422 H1955.80 M1954.20 1422 H1961.35 M1959.75 1422 H1966.90 M1965.30 1422 H1972.45 M1970.85 1422 H1978.00 M1981.95 1422 H1989.10 M1987.50 1422 H1994.65 M1993.05 1422 H2000.20 M1998.60 1422 H2005.75 M2004.15 1422 H2011.30 M2009.70 1422 H2016.85 M2015.25 1422 H2022.40 M2026.35 1422 H2033.50 M2031.90 1422 H2039.05 M2037.45 1422 H2044.60 M2043.00 1422 H2050.15 M2048.55 1422 H2055.70 M2054.10 1422 H2061.25 M2065.20 1422 H2072.35 M2070.75 1422 H2077.90 M2076.30 1422 H2083.45 M2087.40 1422 H2094.55 M2092.95 1422 H2100.10 M2104.05 1422 H2111.20 M2115.15 1422 H2122.30 M2120.70 1422 H2127.85 M2126.25 1422 H2133.40 M2131.80 1422 H2138.95 M2137.35 1422 H2144.50 M2142.90 1422 H2150.05 M2154.00 1422 H2161.15 M2159.55 1422 H2166.70 M2170.65 1422 H2177.80 M2176.20 1422 H2183.35 M2181.75 1422 H2188.90 M2192.85 1422 H2200.00 M2198.40 1422 H2205.55 M2203.95 1422 H2211.10 M2209.50 1422 H2216.65 M2215.05 1422 H2222.20 M2220.60 1422 H2227.75 M2231.70 1422 H2238.85 M2237.25 1422 H2244.40 M2242.80 1422 H2249.95 M2248.35 1422 H2255.50 M2253.90 1422 H2261.05 M2259.45 1422 H2266.60 M2265.00 1422 H2272.15 M2270.55 1422 H2277.70 M2276.10 1422 H2283.25 M2281.65 1422 H2288.80 M2287.20 1422 H2294.35 M2292.75 1422 H2299.90 M2298.30 1422 H2305.45 M2303.85 1422 H2311.00 M2309.40 1422 H2316.55 M2314.95 1422 H2322.10 M2320.50 1422 H2327.65 M2326.05 1422 H2333.20 M2337.15 1422 H2344.30 M2342.70 1422 H2349.85 M2348.25 1422 H2355.40 M2353.80 1422 H2360.95 M2364.90 1422 H2372.05 M2370.45 1422 H2377.60 M2376.00 1422 H2383.15 M2381.55 1422 H2388.70 M2392.65 1422 H2399.80 M2398.20 1422 H2405.35 M2403.75 1422 H2410.90 M2414.85 1422 H2422.00 M2420.40 1422 H2427.55 M2425.95 1422 H2433.10 M2431.50 1422 H2438.65 M2437.05 1422 H2444.20 M2448.15 1422 H2455.30 M2453.70 1422 H2460.85 M2459.25 1422 H2466.40 M2464.80 1422 H2471.95 M2470.35 1422 H2477.50 M2481.45 1422 H2488.60 M2492.55 1422 H2499.70 M2503.65 1422 H2510.80 M2514.75 1422 H2521.90 M2520.30 1422 H2527.45 M2525.85 1422 H2533.00 M2531.40 1422 H2538.55 M2542.50 1422 H2549.65 M2553.60 1422 H2560.75 M2559.15 1422 H2566.30 M2564.70 1422 H2571.85 M2570.25 1422 H2577.40 M2575.80 1422 H2582.95 M2586.90 1422 H2594.05 M2598.00 1422 H2605.15 M960.75 1477.5 H967.90 M988.50 1477.5 H995.65 M1032.90 1477.5 H1040.05 M1082.85 1477.5 H1090.00 M1127.25 1477.5 H1134.40 M1193.85 1477.5 H1201.00 M1204.95 1477.5 H1212.10 M1221.60 1477.5 H1228.75 M1254.90 1477.5 H1262.05 M1266.00 1477.5 H1273.15 M1282.65 1477.5 H1289.80 M1304.85 1477.5 H1312.00 M1315.95 1477.5 H1323.10 M1365.90 1477.5 H1373.05 M1382.55 1477.5 H1389.70 M1393.65 1477.5 H1400.80 M1415.85 1477.5 H1423.00 M1476.90 1477.5 H1484.05 M1499.10 1477.5 H1506.25 M1648.95 1477.5 H1656.10 M1682.25 1477.5 H1689.40 M1698.90 1477.5 H1706.05 M1715.55 1477.5 H1722.70 M1737.75 1477.5 H1744.90 M1748.85 1477.5 H1756.00 M1798.80 1477.5 H1805.95 M1926.45 1477.5 H1933.60 M1976.40 1477.5 H1983.55 M2020.80 1477.5 H2027.95 M2059.65 1477.5 H2066.80 M2081.85 1477.5 H2089.00 M2098.50 1477.5 H2105.65 M2109.60 1477.5 H2116.75 M2148.45 1477.5 H2155.60 M2165.10 1477.5 H2172.25 M2187.30 1477.5 H2194.45 M2226.15 1477.5 H2233.30 M2331.60 1477.5 H2338.75 M2359.35 1477.5 H2366.50 M2387.10 1477.5 H2394.25 M2409.30 1477.5 H2416.45 M2442.60 1477.5 H2449.75 M2475.90 1477.5 H2483.05 M2487.00 1477.5 H2494.15 M2498.10 1477.5 H2505.25 M2509.20 1477.5 H2516.35 M2536.95 1477.5 H2544.10 M2548.05 1477.5 H2555.20 M2581.35 1477.5 H2588.50 M2592.45 1477.5 H2599.60 " fill="none" stroke="#1f6c9c" stroke-width="2.2"/></svg><svg class="s" style="left:2602px;top:1417px;" width="14" height="90" viewBox="0 0 14 90"><rect x="6" y="2" width="4.5" height="86" rx="2.2" fill="#fff" stroke="#111" stroke-width="1.6"/><rect x="2.4" y="17" width="9.5" height="36" rx="2" fill="#222"/><rect x="2.4" y="69" width="9.5" height="12" fill="#aaa"/></svg><div class="b" style="left:955px;top:1506.5px;width:1658px;height:2.6px;background:#1f2226;border-radius:0px;"></div><div class="b" style="left:955px;top:1506.5px;width:2px;height:9px;background:#1f2226;border-radius:0px;"></div><div class="b" style="left:2610.5px;top:1506.5px;width:2px;height:9px;background:#1f2226;border-radius:0px;"></div><div class="b" style="left:1111.9px;top:1506.5px;width:2px;height:9px;background:#1f2226;border-radius:0px;"></div><div class="t" style="left:1092.82px;top:1519.79px;font-size:19.5px;line-height:19.5px;color:#1f2226;font-weight:400;font-family:'Liberation Sans', sans-serif;transform:scaleX(1.0484);">May</div><div class="b" style="left:1391.4px;top:1506.5px;width:2px;height:9px;background:#1f2226;border-radius:0px;"></div><div class="t" style="left:1375.57px;top:1519.79px;font-size:19.5px;line-height:19.5px;color:#1f2226;font-weight:400;font-family:'Liberation Sans', sans-serif;transform:scaleX(1.1037);">Jun</div><div class="b" style="left:1663.4px;top:1506.5px;width:2px;height:9px;background:#1f2226;border-radius:0px;"></div><div class="t" style="left:1651.07px;top:1519.79px;font-size:19.5px;line-height:19.5px;color:#1f2226;font-weight:400;font-family:'Liberation Sans', sans-serif;transform:scaleX(1.1159);">Jul</div><div class="b" style="left:1943.8px;top:1506.5px;width:2px;height:9px;background:#1f2226;border-radius:0px;"></div><div class="t" style="left:1927.30px;top:1519.79px;font-size:19.5px;line-height:19.5px;color:#1f2226;font-weight:400;font-family:'Liberation Sans', sans-serif;transform:scaleX(1.0479);">Aug</div><div class="b" style="left:2225px;top:1506.5px;width:2px;height:9px;background:#1f2226;border-radius:0px;"></div><div class="t" style="left:2209.12px;top:1519.79px;font-size:19.5px;line-height:19.5px;color:#1f2226;font-weight:400;font-family:'Liberation Sans', sans-serif;transform:scaleX(0.9726);">Sep</div><div class="b" style="left:2495.8px;top:1506.5px;width:2px;height:9px;background:#1f2226;border-radius:0px;"></div><div class="t" style="left:2480.14px;top:1519.79px;font-size:19.5px;line-height:19.5px;color:#1f2226;font-weight:400;font-family:'Liberation Sans', sans-serif;transform:scaleX(1.0680);">Oct</div><div class="b" style="left:956px;top:1556.5px;width:489px;height:47px;background:#fff;border:2px solid #dedede;border-radius:6px;"></div><div class="b" style="left:1237.5px;top:1558.5px;width:69px;height:43px;background:#eef4fa;border-radius:0px;"></div><div class="b" style="left:1022px;top:1558.5px;width:2px;height:43px;background:#dedede;border-radius:0px;"></div><div class="b" style="left:1094px;top:1558.5px;width:2px;height:43px;background:#dedede;border-radius:0px;"></div><div class="b" style="left:1166.5px;top:1558.5px;width:2px;height:43px;background:#dedede;border-radius:0px;"></div><div class="b" style="left:1236.5px;top:1558.5px;width:2px;height:43px;background:#dedede;border-radius:0px;"></div><div class="b" style="left:1306px;top:1558.5px;width:2px;height:43px;background:#dedede;border-radius:0px;"></div><div class="b" style="left:1368px;top:1558.5px;width:2px;height:43px;background:#dedede;border-radius:0px;"></div><div class="t" style="left:974.05px;top:1569.65px;font-size:24.75px;line-height:24.75px;color:#1f2226;font-weight:400;font-family:'Liberation Sans', sans-serif;transform:scaleX(1.0245);">1D</div><div class="t" style="left:1038.89px;top:1569.65px;font-size:24.75px;line-height:24.75px;color:#1f2226;font-weight:400;font-family:'Liberation Sans', sans-serif;transform:scaleX(1.1080);">1W</div><div class="t" style="left:1110.70px;top:1569.65px;font-size:24.75px;line-height:24.75px;color:#1f2226;font-weight:400;font-family:'Liberation Sans', sans-serif;transform:scaleX(1.2131);">1M</div><div class="t" style="left:1182.47px;top:1569.65px;font-size:24.75px;line-height:24.75px;color:#1f2226;font-weight:400;font-family:'Liberation Sans', sans-serif;transform:scaleX(1.1429);">3M</div><div class="t" style="left:1253.15px;top:1569.65px;font-size:24.75px;line-height:24.75px;color:#1764b5;font-weight:400;font-family:'Liberation Sans', sans-serif;transform:scaleX(1.1218);">6M</div><div class="t" style="left:1323.60px;top:1569.65px;font-size:24.75px;line-height:24.75px;color:#1f2226;font-weight:400;font-family:'Liberation Sans', sans-serif;transform:scaleX(0.9498);">1Y</div><div class="t" style="left:1386.91px;top:1569.65px;font-size:24.75px;line-height:24.75px;color:#1f2226;font-weight:400;font-family:'Liberation Sans', sans-serif;transform:scaleX(0.9306);">ALL</div><div class="b" style="left:1478.5px;top:1556.5px;width:207px;height:47px;background:#fff;border:2px solid #dedede;border-radius:6px;"></div><div class="b" style="left:1638px;top:1558.5px;width:2px;height:43px;background:#dedede;border-radius:0px;"></div><div class="t" style="left:1495.49px;top:1569.23px;font-size:25.25px;line-height:25.25px;color:#1f2226;font-weight:400;font-family:'Liberation Sans', sans-serif;transform:scaleX(0.9329);">CUSTOM</div><svg class="s" style="left:1610px;top:1576px;" width="16" height="8" viewBox="0 0 16 8"><path d="M0 8 L8 0 L16 8 Z" fill="#999"/></svg><svg class="s" style="left:1649px;top:1572px;" width="24" height="20" viewBox="0 0 24 20"><rect x="1.3" y="1.3" width="21" height="16" rx="2" fill="none" stroke="#333" stroke-width="2.2"/><path d="M12 4.5 L10 6.5 H14 Z M12 14.5 L10 12.5 H14 Z M5 9.3 L7 7.3 V11.3 Z M19 9.3 L17 7.3 V11.3 Z" fill="#333"/></svg>
</body></html>
